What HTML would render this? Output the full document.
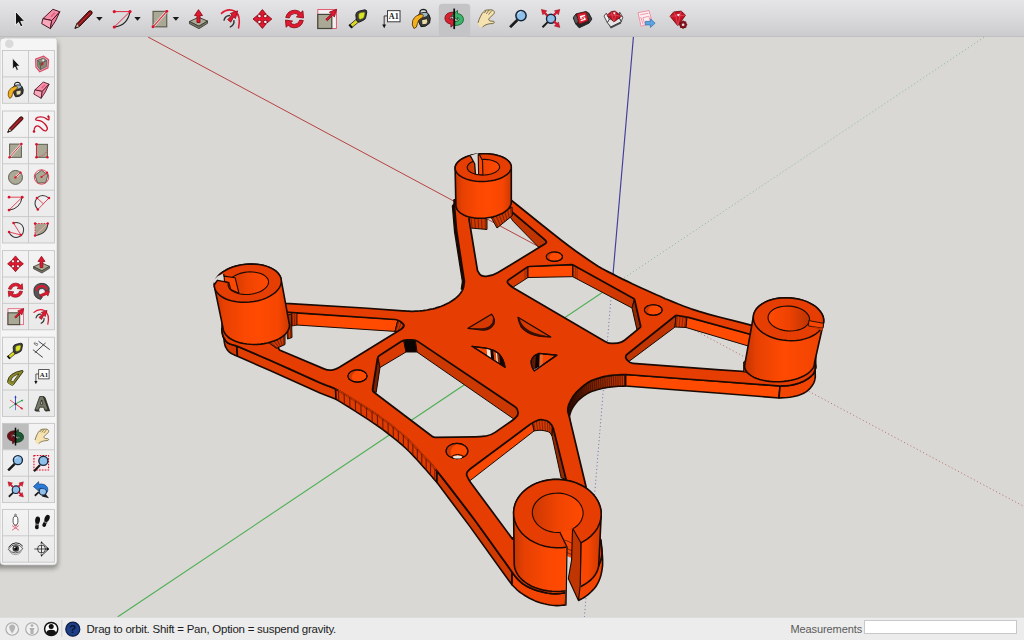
<!DOCTYPE html>
<html lang="en"><head><meta charset="utf-8"><title>SketchUp</title>
<style>
html,body{margin:0;padding:0;}
body{width:1024px;height:640px;overflow:hidden;position:relative;background:#d9d8d4;font-family:"Liberation Sans",sans-serif;}
#tb{position:absolute;left:0;top:0;width:1024px;height:36px;background:linear-gradient(#e5e4e6,#dcdbdd 40%,#d0cfd2 85%,#cbcacd);border-bottom:1px solid #bfbec1;box-sizing:content-box;}
svg{position:absolute;left:0;top:0;}
.st{position:absolute;top:621.5px;font-size:11.5px;line-height:15px;color:#1c1c1c;white-space:nowrap;letter-spacing:-0.245px;}
#hint{left:86.5px;}
#meas{left:790.5px;color:#5a5a5a;font-size:11px;letter-spacing:-0.1px;}
#mbox{position:absolute;left:864.3px;top:619.5px;width:153px;height:14.7px;background:#fff;border:1px solid #c8c8c8;box-sizing:border-box;}
</style></head><body>
<svg id="vp" width="1024" height="640" viewBox="0 0 1024 640">
<line x1="148" y1="37" x2="612.0" y2="286.0" stroke="#b43a3a" stroke-width="0.95"/>
<line x1="612.0" y1="286.0" x2="1024" y2="506.5" stroke="#a84a4a" stroke-width="1" stroke-dasharray="1.1 2.5" opacity="0.7"/>
<line x1="612.0" y1="286.0" x2="117.5" y2="617" stroke="#4fae55" stroke-width="1.1"/>
<line x1="612.0" y1="286.0" x2="984.5" y2="37" stroke="#5aa868" stroke-width="1" stroke-dasharray="1.1 2.5" opacity="0.6"/>
<line x1="612.0" y1="286.0" x2="633.4" y2="37" stroke="#403e9a" stroke-width="1.15"/>
<line x1="612.0" y1="286.0" x2="584.4" y2="617" stroke="#4a4aa8" stroke-width="1" stroke-dasharray="1.1 2.5" opacity="0.7"/>
<defs>
<linearGradient id="gcyl" x1="0" x2="1" y1="0" y2="0"><stop offset="0" stop-color="#c43602"/><stop offset="0.12" stop-color="#e64002"/><stop offset="0.4" stop-color="#fb4802"/><stop offset="0.6" stop-color="#ff4a02"/><stop offset="0.85" stop-color="#f64602"/><stop offset="1" stop-color="#cc3802"/></linearGradient>
<linearGradient id="gcylR" x1="0" x2="1" y1="0" y2="0"><stop offset="0" stop-color="#c03402"/><stop offset="0.15" stop-color="#e64002"/><stop offset="0.5" stop-color="#ff4a02"/><stop offset="1" stop-color="#ee4302"/></linearGradient>
<linearGradient id="ginL" x1="0" x2="1" y1="0" y2="0"><stop offset="0" stop-color="#cc3802"/><stop offset="0.5" stop-color="#f04402"/><stop offset="1" stop-color="#ff4a02"/></linearGradient>
<linearGradient id="ginR" x1="0" x2="1" y1="0" y2="0"><stop offset="0" stop-color="#ff4a02"/><stop offset="0.5" stop-color="#ee4202"/><stop offset="1" stop-color="#bc3402"/></linearGradient>
<linearGradient id="gwallUR" x1="0" x2="1" y1="0" y2="0"><stop offset="0" stop-color="#e23d02"/><stop offset="1" stop-color="#c83602"/></linearGradient>
<linearGradient id="gfil" x1="0" x2="1" y1="0" y2="0"><stop offset="0" stop-color="#180502"/><stop offset="0.3" stop-color="#6a1c02"/><stop offset="0.7" stop-color="#a42e02"/><stop offset="1" stop-color="#cc3802"/></linearGradient>
</defs>
<polygon points="221.9,329.0 222.0,329.7 222.1,330.7 222.2,331.8 222.3,333.0 222.5,334.0 222.7,334.8 222.8,335.5 223.0,336.2 223.3,337.0 223.8,337.8 224.4,338.8 225.1,339.9 225.9,341.0 226.8,342.1 228.0,343.0 229.6,343.8 231.6,344.5 233.6,345.1 235.4,345.6 236.7,346.0 237.5,356.2 236.4,355.8 234.9,355.2 233.2,354.4 231.4,353.5 230.0,352.6 228.8,351.6 227.8,350.4 226.9,349.2 226.1,347.8 225.4,346.5 224.9,345.0 224.5,343.2 224.2,341.5 224.1,340.0 223.9,339.0" fill="#d03a02" stroke="#1a0a04" stroke-width="1.6" stroke-linejoin="round" />
<polygon points="236.7,346.0 270.0,360.3 320.0,382.7 335.6,389.0 336.0,399.2 320.0,393.0 270.0,370.6 237.5,356.2" fill="#e03e02" stroke="#1a0a04" stroke-width="1.6" stroke-linejoin="round" />
<polygon points="335.6,389.0 338.8,390.9 343.3,393.5 348.5,396.6 353.9,399.9 359.0,403.0 363.7,406.0 368.4,409.0 373.1,412.0 377.8,415.2 382.5,418.6 387.3,422.2 392.2,426.0 397.0,429.8 401.7,433.7 406.0,437.5 409.9,441.2 413.6,445.0 417.0,448.7 420.3,452.3 423.4,455.8 426.6,459.3 429.8,462.8 432.7,466.2 435.2,469.0 437.0,471.0 437.0,482.5 435.2,480.4 432.7,477.6 429.8,474.2 426.6,470.5 423.4,467.0 420.3,463.5 417.0,459.8 413.6,456.1 409.9,452.3 406.0,448.5 401.7,444.7 397.0,440.7 392.2,436.8 387.3,433.0 382.5,429.4 377.8,426.0 373.1,422.8 368.4,419.7 363.7,416.6 359.0,413.6 354.0,410.4 348.7,407.0 343.5,403.9 339.1,401.1 336.0,399.2" fill="#e03c02" stroke="#1a0a04" stroke-width="1.6" stroke-linejoin="round" />
<polygon points="437.0,471.0 474.7,520.0 510.6,570.0 512.0,572.3 512.0,584.8 501.2,570.0 470.0,526.6 437.0,482.5" fill="#d03a02" stroke="#1a0a04" stroke-width="1.6" stroke-linejoin="round" />
<polygon points="512.0,572.3 513.2,573.8 515.0,576.0 517.0,578.4 519.0,580.5 520.9,582.2 522.8,583.7 524.8,585.1 527.0,586.4 529.5,587.6 532.2,588.8 535.1,589.9 538.0,590.8 541.0,591.6 544.2,592.4 547.3,593.0 550.0,593.4 552.3,593.7 554.2,593.8 556.1,593.8 558.0,593.7 560.2,593.5 562.5,593.2 564.6,592.8 566.0,592.6 565.5,605.0 564.2,605.1 562.2,605.3 560.1,605.5 558.0,605.6 556.1,605.6 554.3,605.5 552.3,605.3 550.0,605.0 547.3,604.5 544.2,603.8 541.0,603.0 538.0,602.0 535.1,600.9 532.2,599.5 529.5,598.2 527.0,596.8 524.8,595.5 522.8,594.2 520.9,592.9 519.0,591.5 517.0,589.8 515.0,587.8 513.2,586.0 512.0,584.8" fill="#f24402" stroke="#1a0a04" stroke-width="1.6" stroke-linejoin="round" />
<line x1="236.7" y1="346.0" x2="237.5" y2="356.2" stroke="#1a0a04" stroke-width="0.8" />
<line x1="512.0" y1="572.3" x2="512.0" y2="584.8" stroke="#1a0a04" stroke-width="0.8" />
<polygon points="578.0,585.0 579.1,584.5 580.7,583.8 582.4,582.9 584.0,582.0 585.4,581.1 586.7,580.1 588.0,579.0 589.4,577.8 590.8,576.5 592.3,575.1 593.7,573.6 595.0,572.0 596.1,570.4 597.1,568.7 597.9,567.0 598.8,565.3 599.5,563.5 600.2,561.7 600.8,559.8 601.3,558.0 601.6,556.4 601.9,554.8 602.0,553.1 601.9,551.0 601.6,548.0 601.0,544.4 600.4,541.1 600.0,538.8 601.0,540.0 601.3,543.6 601.8,548.8 602.3,554.4 602.6,559.0 602.6,562.4 602.6,565.1 602.3,567.6 602.0,570.0 601.5,572.5 601.0,574.9 600.3,577.2 599.5,579.4 598.7,581.5 597.7,583.4 596.7,585.2 595.5,587.0 594.1,588.7 592.5,590.4 590.9,592.0 589.4,593.4 588.0,594.6 586.7,595.7 585.3,596.6 584.0,597.5 582.5,598.4 580.9,599.3 579.4,600.0 578.4,600.5" fill="#f24402" stroke="#1a0a04" stroke-width="1.6" stroke-linejoin="round" />
<polygon points="569.0,415.6 568.7,414.8 568.4,413.6 568.0,412.3 567.8,411.0 567.8,409.7 567.9,408.3 568.2,406.9 568.5,405.5 569.0,404.1 569.6,402.8 570.3,401.4 571.0,400.0 571.8,398.6 572.6,397.2 573.5,395.8 574.5,394.5 575.5,393.3 576.5,392.2 577.6,391.1 578.8,390.0 580.1,388.8 581.5,387.5 583.0,386.2 584.5,385.0 586.0,383.9 587.6,382.8 589.3,381.7 591.0,380.8 592.9,380.0 594.9,379.3 597.0,378.6 599.0,378.0 601.0,377.4 602.9,376.9 604.9,376.4 607.0,376.0 609.2,375.7 611.4,375.4 613.7,375.2 616.0,375.0 618.6,374.8 621.4,374.7 623.9,374.6 625.6,374.5 625.6,386.0 623.9,386.1 621.4,386.2 618.6,386.3 616.0,386.5 613.7,386.7 611.4,386.9 609.2,387.2 607.0,387.5 604.9,387.9 602.9,388.3 601.0,388.7 599.0,389.2 597.0,389.7 594.9,390.4 592.9,391.0 591.0,391.7 589.3,392.5 587.8,393.3 586.4,394.1 585.0,395.0 583.7,395.9 582.4,396.8 581.2,397.8 580.0,398.8 578.9,399.8 577.9,400.8 576.9,401.9 576.0,403.0 575.1,404.2 574.1,405.5 573.3,406.8 572.5,408.0 571.9,409.1 571.4,410.2 570.9,411.4 570.5,412.5 570.1,413.7 569.8,414.9 569.5,416.2 569.4,417.5 569.4,418.8 569.4,420.1 569.6,421.5 569.8,423.0 570.2,424.8 570.8,426.8 571.3,428.7 571.7,430.0" fill="url(#gfil)" stroke="#1a0a04" stroke-width="1.6" stroke-linejoin="round" />
<line x1="567.8" y1="409.9" x2="569.4" y2="419.1" stroke="#3a0e02" stroke-width="0.9" opacity="0.7"/>
<line x1="568.0" y1="407.7" x2="569.5" y2="416.9" stroke="#3a0e02" stroke-width="0.9" opacity="0.7"/>
<line x1="568.5" y1="405.5" x2="569.8" y2="414.8" stroke="#3a0e02" stroke-width="0.9" opacity="0.7"/>
<line x1="569.3" y1="403.5" x2="570.4" y2="412.7" stroke="#3a0e02" stroke-width="0.9" opacity="0.7"/>
<line x1="570.2" y1="401.5" x2="571.2" y2="410.7" stroke="#3a0e02" stroke-width="0.9" opacity="0.7"/>
<line x1="571.3" y1="399.5" x2="572.1" y2="408.8" stroke="#3a0e02" stroke-width="0.9" opacity="0.7"/>
<line x1="572.4" y1="397.6" x2="573.2" y2="406.9" stroke="#3a0e02" stroke-width="0.9" opacity="0.7"/>
<line x1="573.6" y1="395.8" x2="574.4" y2="405.1" stroke="#3a0e02" stroke-width="0.9" opacity="0.7"/>
<line x1="574.9" y1="394.0" x2="575.7" y2="403.4" stroke="#3a0e02" stroke-width="0.9" opacity="0.7"/>
<line x1="576.4" y1="392.4" x2="577.0" y2="401.8" stroke="#3a0e02" stroke-width="0.9" opacity="0.7"/>
<line x1="577.9" y1="390.8" x2="578.5" y2="400.2" stroke="#3a0e02" stroke-width="0.9" opacity="0.7"/>
<line x1="579.5" y1="389.3" x2="580.0" y2="398.7" stroke="#3a0e02" stroke-width="0.9" opacity="0.7"/>
<line x1="581.2" y1="387.8" x2="581.7" y2="397.4" stroke="#3a0e02" stroke-width="0.9" opacity="0.7"/>
<line x1="582.8" y1="386.3" x2="583.4" y2="396.1" stroke="#3a0e02" stroke-width="0.9" opacity="0.7"/>
<line x1="584.6" y1="385.0" x2="585.2" y2="394.9" stroke="#3a0e02" stroke-width="0.9" opacity="0.7"/>
<line x1="586.3" y1="383.6" x2="587.0" y2="393.7" stroke="#3a0e02" stroke-width="0.9" opacity="0.7"/>
<line x1="588.2" y1="382.4" x2="588.9" y2="392.7" stroke="#3a0e02" stroke-width="0.9" opacity="0.7"/>
<line x1="590.1" y1="381.3" x2="590.8" y2="391.8" stroke="#3a0e02" stroke-width="0.9" opacity="0.7"/>
<line x1="592.1" y1="380.3" x2="592.8" y2="391.0" stroke="#3a0e02" stroke-width="0.9" opacity="0.7"/>
<line x1="594.1" y1="379.5" x2="594.9" y2="390.3" stroke="#3a0e02" stroke-width="0.9" opacity="0.7"/>
<line x1="596.2" y1="378.8" x2="596.9" y2="389.8" stroke="#3a0e02" stroke-width="0.9" opacity="0.7"/>
<line x1="598.3" y1="378.2" x2="599.0" y2="389.2" stroke="#3a0e02" stroke-width="0.9" opacity="0.7"/>
<line x1="600.5" y1="377.6" x2="601.1" y2="388.7" stroke="#3a0e02" stroke-width="0.9" opacity="0.7"/>
<line x1="602.6" y1="377.0" x2="603.2" y2="388.2" stroke="#3a0e02" stroke-width="0.9" opacity="0.7"/>
<line x1="604.7" y1="376.5" x2="605.3" y2="387.8" stroke="#3a0e02" stroke-width="0.9" opacity="0.7"/>
<line x1="606.9" y1="376.0" x2="607.4" y2="387.4" stroke="#3a0e02" stroke-width="0.9" opacity="0.7"/>
<line x1="609.1" y1="375.7" x2="609.5" y2="387.1" stroke="#3a0e02" stroke-width="0.9" opacity="0.7"/>
<line x1="611.3" y1="375.4" x2="611.7" y2="386.9" stroke="#3a0e02" stroke-width="0.9" opacity="0.7"/>
<line x1="613.5" y1="375.2" x2="613.8" y2="386.7" stroke="#3a0e02" stroke-width="0.9" opacity="0.7"/>
<line x1="615.7" y1="375.0" x2="616.0" y2="386.5" stroke="#3a0e02" stroke-width="0.9" opacity="0.7"/>
<line x1="617.9" y1="374.9" x2="618.1" y2="386.4" stroke="#3a0e02" stroke-width="0.9" opacity="0.7"/>
<line x1="620.1" y1="374.8" x2="620.2" y2="386.2" stroke="#3a0e02" stroke-width="0.9" opacity="0.7"/>
<line x1="622.3" y1="374.6" x2="622.4" y2="386.1" stroke="#3a0e02" stroke-width="0.9" opacity="0.7"/>
<line x1="624.5" y1="374.5" x2="624.5" y2="386.0" stroke="#3a0e02" stroke-width="0.9" opacity="0.7"/>
<polygon points="625.6,374.5 720.0,381.5 780.0,386.0 779.0,398.0 720.0,393.3 625.6,386.0" fill="#ff4a02" stroke="#1a0a04" stroke-width="1.6" stroke-linejoin="round" />
<polygon points="780.0,386.0 781.8,385.9 784.4,385.8 787.3,385.6 790.0,385.3 792.4,384.9 794.8,384.4 797.2,383.7 799.4,383.0 801.6,382.1 803.7,381.2 805.7,380.1 807.5,379.0 809.2,377.8 810.8,376.5 812.2,375.1 813.4,373.8 814.3,372.3 814.8,370.9 815.2,369.4 815.5,368.0 815.5,366.6 815.4,365.1 815.2,363.9 815.0,363.0 815.3,377.0 815.1,378.0 814.9,379.4 814.5,381.0 814.0,382.5 813.3,383.9 812.3,385.4 811.3,386.7 810.3,388.0 809.3,389.1 808.3,390.0 807.3,390.9 806.0,391.8 804.6,392.7 803.0,393.5 801.3,394.3 799.4,395.0 797.3,395.7 795.0,396.2 792.5,396.8 790.0,397.2 787.1,397.5 783.9,397.7 781.0,397.9 779.0,398.0" fill="#f24402" stroke="#1a0a04" stroke-width="1.6" stroke-linejoin="round" />
<line x1="625.6" y1="374.5" x2="625.6" y2="386.0" stroke="#1a0a04" stroke-width="0.8" />
<line x1="780.0" y1="386.0" x2="779.0" y2="398.0" stroke="#1a0a04" stroke-width="0.8" />
<polygon points="454.0,204.0 456.5,230.0 464.4,281.5 462.8,289.4 461.3,289.0 462.4,281.5 454.6,232.0 452.4,206.0" fill="#1a0602" stroke="#1a0a04" stroke-width="1.3" stroke-linejoin="round" />
<polygon points="512.0,212.0 546.3,241.5 546.0,244.0 538.4,247.0 513.4,221.5 508.0,214.0" fill="#c03402" stroke="#1a0a04" stroke-width="1" stroke-linejoin="round" />
<polygon points="504.0,281.4 528.0,266.5 528.0,277.5 513.3,287.0" fill="#d83a02" stroke="#1a0a04" stroke-width="1" stroke-linejoin="round" />
<polygon points="528.0,266.5 572.7,264.7 572.7,276.7 528.0,277.5" fill="#ff4a02" stroke="#1a0a04" stroke-width="1" stroke-linejoin="round" />
<polygon points="572.7,264.7 634.5,299.0 632.0,308.0 572.7,276.7" fill="url(#gwallUR)" stroke="#1a0a04" stroke-width="1" stroke-linejoin="round" />
<polygon points="634.5,299.0 640.8,327.0 637.0,330.0 632.0,308.0" fill="#982a02" stroke="#1a0a04" stroke-width="1" stroke-linejoin="round" />
<line x1="573.6" y1="265.2" x2="573.6" y2="277.2" stroke="#1a0a04" stroke-width="0.7" opacity="0.5"/>
<line x1="575.3" y1="266.1" x2="575.3" y2="278.1" stroke="#1a0a04" stroke-width="0.7" opacity="0.5"/>
<line x1="577.1" y1="267.0" x2="577.1" y2="279.0" stroke="#1a0a04" stroke-width="0.7" opacity="0.5"/>
<line x1="525.0" y1="268.4" x2="525.0" y2="279.4" stroke="#1a0a04" stroke-width="0.7" opacity="0.5"/>
<line x1="527.0" y1="267.1" x2="527.0" y2="278.1" stroke="#1a0a04" stroke-width="0.7" opacity="0.5"/>
<polygon points="623.0,356.0 676.0,315.3 675.0,327.0 629.0,361.4" fill="#c03402" stroke="#1a0a04" stroke-width="1" stroke-linejoin="round" />
<polygon points="676.0,315.3 687.0,317.0 686.0,327.5 675.0,327.0" fill="#d83a02" stroke="#1a0a04" stroke-width="1" stroke-linejoin="round" />
<line x1="677.4" y1="315.5" x2="676.4" y2="327.1" stroke="#1a0a04" stroke-width="0.7" opacity="0.6"/>
<line x1="680.1" y1="315.9" x2="679.1" y2="327.2" stroke="#1a0a04" stroke-width="0.7" opacity="0.6"/>
<line x1="682.9" y1="316.4" x2="681.9" y2="327.3" stroke="#1a0a04" stroke-width="0.7" opacity="0.6"/>
<line x1="685.6" y1="316.8" x2="684.6" y2="327.4" stroke="#1a0a04" stroke-width="0.7" opacity="0.6"/>
<polygon points="687.0,317.0 760.0,337.0 760.0,349.5 686.0,327.5" fill="#ff4a02" stroke="#1a0a04" stroke-width="1" stroke-linejoin="round" />
<polygon points="285.0,312.0 292.6,312.6 398.0,319.7 395.0,331.4 296.5,325.0 288.0,324.5" fill="#ff4a02" stroke="#1a0a04" stroke-width="1" stroke-linejoin="round" />
<polygon points="398.0,319.7 404.4,325.0 402.8,328.3 400.0,334.0 395.0,331.4" fill="#d83a02" stroke="#1a0a04" stroke-width="1" stroke-linejoin="round" />
<line x1="399.1" y1="320.6" x2="395.8" y2="331.8" stroke="#1a0a04" stroke-width="0.7" opacity="0.6"/>
<line x1="401.2" y1="322.3" x2="397.5" y2="332.7" stroke="#1a0a04" stroke-width="0.7" opacity="0.6"/>
<line x1="403.3" y1="324.1" x2="399.2" y2="333.6" stroke="#1a0a04" stroke-width="0.7" opacity="0.6"/>
<polygon points="377.8,356.5 372.3,391.0 376.2,392.5 380.0,367.5" fill="#7a2002" stroke="#1a0a04" stroke-width="1" stroke-linejoin="round" />
<polygon points="377.8,356.5 403.6,340.0 406.0,352.0 380.0,367.5" fill="#d83a02" stroke="#1a0a04" stroke-width="1" stroke-linejoin="round" />
<polygon points="403.6,339.0 415.3,339.0 417.0,352.0 406.0,352.0" fill="#0a0402" stroke="#1a0a04" stroke-width="1" stroke-linejoin="round" />
<polygon points="415.3,339.7 517.0,408.0 519.5,415.0 513.8,419.0 417.0,352.0" fill="#cc3802" stroke="#1a0a04" stroke-width="1" stroke-linejoin="round" />
<polygon points="532.3,422.7 533.6,422.0 535.4,421.0 537.4,420.1 539.4,419.5 541.3,419.3 543.3,419.4 545.2,419.7 547.0,420.3 548.7,421.5 550.3,423.1 551.7,424.7 552.7,425.8 552.0,436.0 551.5,435.2 550.9,434.1 550.0,432.9 548.8,432.0 547.1,431.4 545.1,430.9 543.0,430.5 541.0,430.3 539.0,430.3 537.0,430.5 535.2,430.8 534.0,431.0" fill="#d83a02" stroke="#1a0a04" stroke-width="1" stroke-linejoin="round" />
<line x1="533.6" y1="422.0" x2="535.3" y2="430.8" stroke="#1a0a04" stroke-width="0.7" opacity="0.6"/>
<line x1="536.2" y1="420.7" x2="537.8" y2="430.5" stroke="#1a0a04" stroke-width="0.7" opacity="0.6"/>
<line x1="539.0" y1="419.6" x2="540.3" y2="430.3" stroke="#1a0a04" stroke-width="0.7" opacity="0.6"/>
<line x1="541.9" y1="419.3" x2="542.8" y2="430.5" stroke="#1a0a04" stroke-width="0.7" opacity="0.6"/>
<line x1="544.8" y1="419.6" x2="545.3" y2="430.9" stroke="#1a0a04" stroke-width="0.7" opacity="0.6"/>
<line x1="547.5" y1="420.6" x2="547.7" y2="431.6" stroke="#1a0a04" stroke-width="0.7" opacity="0.6"/>
<line x1="549.7" y1="422.5" x2="549.9" y2="432.9" stroke="#1a0a04" stroke-width="0.7" opacity="0.6"/>
<line x1="551.7" y1="424.7" x2="551.3" y2="434.9" stroke="#1a0a04" stroke-width="0.7" opacity="0.6"/>
<polygon points="532.3,422.7 468.8,470.0 465.0,474.0 469.5,481.0 534.0,431.0" fill="#f84702" stroke="#1a0a04" stroke-width="1" stroke-linejoin="round" />
<polygon points="552.7,425.8 566.0,479.0 561.2,478.0 552.0,436.0" fill="#982a02" stroke="#1a0a04" stroke-width="1" stroke-linejoin="round" />
<path d="M454.0 200.0 L456.5 230.0 L464.4 281.5 L464.3 282.2 L464.2 283.3 L464.0 284.4 L463.8 285.5 L463.6 286.5 L463.5 287.4 L463.2 288.3 L462.8 289.4 L462.2 290.6 L461.4 291.9 L460.5 293.3 L459.5 294.5 L458.5 295.6 L457.4 296.7 L456.3 297.7 L455.0 298.8 L453.6 299.8 L452.1 300.8 L450.6 301.8 L449.0 302.7 L447.4 303.5 L445.8 304.3 L444.2 305.1 L442.5 305.8 L440.7 306.5 L438.8 307.1 L436.9 307.7 L435.0 308.3 L433.0 308.8 L431.0 309.2 L429.0 309.6 L427.0 310.0 L425.0 310.3 L423.0 310.6 L421.0 310.8 L419.0 311.0 L417.1 311.1 L415.2 311.2 L413.2 311.3 L411.2 311.3 L409.0 311.2 L406.5 311.1 L404.3 310.9 L402.8 310.8 L363.8 308.0 L285.6 303.3 L270.0 302.0 L222.5 322.0 L222.4 323.0 L222.2 324.4 L222.1 326.0 L222.0 327.6 L221.9 329.0 L221.9 330.1 L222.0 331.2 L222.2 332.2 L222.3 333.1 L222.5 334.0 L222.7 334.8 L222.8 335.5 L223.0 336.2 L223.3 337.0 L223.8 337.8 L224.4 338.8 L225.1 339.9 L225.9 341.0 L226.8 342.1 L228.0 343.0 L229.6 343.8 L231.6 344.5 L233.6 345.1 L235.4 345.6 L236.7 346.0 L241.0 347.8 L246.8 350.3 L253.9 353.3 L261.7 356.7 L270.0 360.3 L279.5 364.5 L290.4 369.4 L301.7 374.5 L311.9 379.1 L320.0 382.7 L325.2 384.9 L328.3 386.0 L330.4 386.7 L332.5 387.5 L335.6 389.0 L339.8 391.3 L344.4 394.0 L349.3 396.9 L354.2 400.0 L359.0 403.0 L363.7 406.0 L368.4 409.0 L373.1 412.0 L377.8 415.2 L382.5 418.6 L387.3 422.2 L392.2 426.0 L397.0 429.8 L401.7 433.7 L406.0 437.5 L409.9 441.2 L413.6 445.0 L417.0 448.7 L420.3 452.3 L423.4 455.8 L426.0 458.5 L428.0 460.5 L430.0 462.6 L432.8 465.8 L437.0 471.0 L443.0 478.6 L450.4 488.1 L458.6 498.7 L466.9 509.6 L474.7 520.0 L482.5 530.7 L490.8 542.2 L498.8 553.4 L505.7 563.0 L510.6 570.0 L513.1 573.5 L513.7 574.5 L513.2 573.8 L512.4 572.8 L512.0 572.3 L513.2 573.8 L515.0 576.0 L517.0 578.4 L519.0 580.5 L520.9 582.2 L522.8 583.7 L524.8 585.1 L527.0 586.4 L529.5 587.6 L532.2 588.8 L535.1 589.9 L538.0 590.8 L541.0 591.6 L544.2 592.4 L547.3 593.0 L550.0 593.4 L552.3 593.7 L554.2 593.8 L556.1 593.8 L558.0 593.7 L560.2 593.5 L562.5 593.2 L564.6 592.8 L566.0 592.6 L566.0 560.0 L578.0 560.0 L578.0 585.0 L579.1 584.5 L580.7 583.8 L582.4 582.9 L584.0 582.0 L585.4 581.1 L586.7 580.1 L588.0 579.0 L589.4 577.8 L590.8 576.5 L592.3 575.1 L593.7 573.6 L595.0 572.0 L596.1 570.4 L597.1 568.7 L597.9 567.0 L598.8 565.3 L599.5 563.5 L600.2 561.7 L600.8 559.8 L601.3 558.0 L601.6 556.4 L601.9 554.8 L602.0 553.1 L601.9 551.0 L601.6 548.0 L601.0 544.4 L600.4 541.1 L600.0 538.8 L586.2 487.5 L569.0 415.6 L568.7 414.8 L568.4 413.6 L568.0 412.3 L567.8 411.0 L567.8 409.7 L567.9 408.3 L568.2 406.9 L568.5 405.5 L569.0 404.1 L569.6 402.8 L570.3 401.4 L571.0 400.0 L571.8 398.6 L572.6 397.2 L573.5 395.8 L574.5 394.5 L575.5 393.3 L576.5 392.2 L577.6 391.1 L578.8 390.0 L580.1 388.8 L581.5 387.5 L583.0 386.2 L584.5 385.0 L586.0 383.9 L587.6 382.8 L589.3 381.7 L591.0 380.8 L592.9 380.0 L594.9 379.3 L597.0 378.6 L599.0 378.0 L601.0 377.4 L602.9 376.9 L604.9 376.4 L607.0 376.0 L609.2 375.7 L611.4 375.4 L613.7 375.2 L616.0 375.0 L618.6 374.8 L621.4 374.7 L623.9 374.6 L625.6 374.5 L720.0 381.5 L780.0 386.0 L781.8 385.9 L784.4 385.8 L787.3 385.6 L790.0 385.3 L792.4 384.9 L794.8 384.4 L797.2 383.7 L799.4 383.0 L801.6 382.1 L803.7 381.2 L805.7 380.1 L807.5 379.0 L809.2 377.8 L810.8 376.5 L812.2 375.1 L813.4 373.8 L814.3 372.3 L814.8 370.9 L815.2 369.4 L815.5 368.0 L815.5 366.6 L815.4 365.1 L815.2 363.9 L815.0 363.0 L812.0 340.0 L751.7 325.3 L744.2 323.4 L733.4 320.6 L721.0 317.5 L709.0 314.3 L699.0 311.4 L691.0 308.8 L683.9 306.2 L677.7 303.8 L672.4 301.6 L668.0 299.8 L665.2 298.7 L663.9 298.1 L663.2 297.8 L662.2 297.3 L660.0 296.2 L656.4 294.7 L651.9 292.7 L647.0 290.5 L641.9 288.2 L637.0 286.0 L632.2 283.8 L627.4 281.4 L622.5 279.1 L617.8 276.7 L613.3 274.4 L609.3 272.4 L605.8 270.6 L602.3 268.7 L598.4 266.4 L593.8 263.4 L588.3 259.8 L582.5 255.8 L576.0 251.2 L568.9 246.0 L561.0 240.0 L551.2 232.3 L539.6 223.0 L527.8 213.5 L517.5 205.2 L510.3 199.4 L483.0 190.0 Z M469.0 219.0 L477.5 270.6 L479.4 273.8 Q481.0 276.5 486.2 276.3 L487.3 276.2 Q492.5 276.0 498.0 272.6 L544.8 244.0 Q546.5 243.0 546.4 242.1 L546.4 241.9 Q546.3 241.0 544.8 239.7 L512.0 212.0 L500.0 205.0 L480.0 210.0 Z M508.3 283.6 Q506.2 281.4 508.7 279.7 L527.2 267.1 Q528.0 266.5 529.0 266.5 L571.7 264.7 Q572.7 264.7 573.6 265.2 L633.6 298.5 Q634.5 299.0 634.7 300.0 L640.6 326.0 Q640.8 327.0 640.0 327.6 L624.6 340.3 Q621.5 342.8 617.5 343.1 L613.0 343.4 Q609.0 343.7 605.5 341.7 L513.6 288.0 Q511.0 286.5 509.0 284.3 Z M626.6 359.3 Q624.5 356.5 627.2 354.3 L674.8 316.2 Q676.0 315.3 677.5 315.5 L685.5 316.8 Q687.0 317.0 688.4 317.4 L760.0 337.0 L760.0 372.5 L720.0 369.8 L633.0 363.3 Q629.5 363.0 627.4 360.2 Z M279.4 350.0 L270.0 330.0 L285.0 312.0 L292.6 312.6 L395.0 319.5 Q398.0 319.7 400.4 321.5 L402.2 323.0 Q404.6 324.8 403.8 326.4 L403.6 326.7 Q402.8 328.3 401.1 329.3 L339.0 367.6 Q335.6 369.7 332.1 370.1 L331.3 370.1 Q327.8 370.5 324.1 368.9 Z M377.5 358.5 Q377.8 356.5 379.5 355.4 L401.1 341.6 Q403.6 340.0 406.6 339.9 L412.3 339.8 Q415.3 339.7 417.8 341.4 L515.3 406.9 Q517.0 408.0 517.4 409.9 L517.9 411.9 Q518.6 415.0 516.1 417.2 L515.2 418.0 Q513.0 420.0 510.5 421.7 L495.1 432.4 Q491.0 435.3 486.1 436.0 L484.9 436.1 Q480.0 436.8 475.0 436.9 L435.6 437.4 Q433.6 437.4 432.0 436.2 L373.9 392.2 Q372.3 391.0 372.6 389.0 Z M529.9 424.5 Q532.3 422.7 535.0 421.5 L536.7 420.7 Q539.4 419.5 542.4 419.8 L544.0 420.0 Q547.0 420.3 549.2 422.4 L550.5 423.7 Q552.7 425.8 553.4 428.7 L566.0 479.0 L540.0 500.0 L512.5 539.0 L471.0 483.0 Q469.5 481.0 468.4 478.8 L467.3 476.7 Q466.0 474.0 467.2 472.2 L467.6 471.6 Q468.8 470.0 470.4 468.8 Z" fill="#e63d02" fill-rule="evenodd" stroke="#1a0a04" stroke-width="1.75" stroke-linejoin="round"/>
<polyline points="338.8,390.9 343.3,393.5 348.5,396.6 353.9,399.9 359.0,403.0 363.7,406.0 368.4,409.0 373.1,412.0 377.8,415.2 382.5,418.6 387.3,422.2 392.2,426.0 397.0,429.8 401.7,433.7 406.0,437.5 409.9,441.2 413.6,445.0 417.0,448.7 420.3,452.3 423.4,455.8 426.6,459.3 429.8,462.8 432.7,466.2 435.2,469.0" fill="none" stroke="#e63d02" stroke-width="1.9" stroke-linejoin="round" stroke-linecap="round" />
<polyline points="335.6,389.0 338.8,390.9 343.3,393.5 348.5,396.6 353.9,399.9 359.0,403.0 363.7,406.0 368.4,409.0 373.1,412.0 377.8,415.2 382.5,418.6 387.3,422.2 392.2,426.0 397.0,429.8 401.7,433.7 406.0,437.5 409.9,441.2 413.6,445.0 417.0,448.7 420.3,452.3 423.4,455.8 426.6,459.3 429.8,462.8 432.7,466.2 435.2,469.0 437.0,471.0" fill="none" stroke="#7a2002" stroke-width="0.7" stroke-linejoin="round" stroke-linecap="round" />
<line x1="338.4" y1="390.7" x2="338.8" y2="400.9" stroke="#5a1602" stroke-width="1.1" opacity="0.85"/>
<line x1="344.1" y1="394.0" x2="344.4" y2="404.4" stroke="#5a1602" stroke-width="1.1" opacity="0.85"/>
<line x1="349.7" y1="397.3" x2="350.0" y2="407.9" stroke="#5a1602" stroke-width="1.1" opacity="0.85"/>
<line x1="355.4" y1="400.7" x2="355.6" y2="411.4" stroke="#5a1602" stroke-width="1.1" opacity="0.85"/>
<line x1="360.9" y1="404.2" x2="361.1" y2="415.0" stroke="#5a1602" stroke-width="1.1" opacity="0.85"/>
<line x1="366.5" y1="407.7" x2="366.6" y2="418.5" stroke="#5a1602" stroke-width="1.1" opacity="0.85"/>
<line x1="372.0" y1="411.3" x2="372.2" y2="422.2" stroke="#5a1602" stroke-width="1.1" opacity="0.85"/>
<line x1="377.4" y1="415.0" x2="377.6" y2="425.9" stroke="#5a1602" stroke-width="1.1" opacity="0.85"/>
<line x1="382.8" y1="418.8" x2="382.9" y2="429.7" stroke="#5a1602" stroke-width="1.1" opacity="0.85"/>
<line x1="388.0" y1="422.7" x2="388.2" y2="433.7" stroke="#5a1602" stroke-width="1.1" opacity="0.85"/>
<line x1="393.2" y1="426.8" x2="393.4" y2="437.8" stroke="#5a1602" stroke-width="1.1" opacity="0.85"/>
<line x1="398.3" y1="430.9" x2="398.5" y2="442.0" stroke="#5a1602" stroke-width="1.1" opacity="0.85"/>
<line x1="403.3" y1="435.1" x2="403.5" y2="446.2" stroke="#5a1602" stroke-width="1.1" opacity="0.85"/>
<line x1="408.2" y1="439.6" x2="408.3" y2="450.7" stroke="#5a1602" stroke-width="1.1" opacity="0.85"/>
<line x1="412.8" y1="444.2" x2="412.9" y2="455.4" stroke="#5a1602" stroke-width="1.1" opacity="0.85"/>
<line x1="417.3" y1="449.0" x2="417.4" y2="460.3" stroke="#5a1602" stroke-width="1.1" opacity="0.85"/>
<line x1="421.7" y1="453.9" x2="421.8" y2="465.2" stroke="#5a1602" stroke-width="1.1" opacity="0.85"/>
<line x1="426.1" y1="458.7" x2="426.2" y2="470.1" stroke="#5a1602" stroke-width="1.1" opacity="0.85"/>
<line x1="430.5" y1="463.6" x2="430.5" y2="475.0" stroke="#5a1602" stroke-width="1.1" opacity="0.85"/>
<line x1="434.8" y1="468.5" x2="434.8" y2="480.0" stroke="#5a1602" stroke-width="1.1" opacity="0.85"/>
<ellipse cx="554.4" cy="256.7" rx="8.1" ry="4.7" fill="#ff4a02" stroke="#1a0a04" stroke-width="1.1"/>
<path d="M551.6 261.1 A8.1 4.7 0 0 1 555.2 252.0 A10.1 6.1 0 0 0 551.6 261.1 Z" fill="#cc3802" opacity="0.9"/>
<ellipse cx="554.4" cy="256.7" rx="8.1" ry="4.7" fill="none" stroke="#1a0a04" stroke-width="1.1"/>
<ellipse cx="653.3" cy="310.0" rx="8.9" ry="5.2" fill="#ff4a02" stroke="#1a0a04" stroke-width="1.1"/>
<path d="M650.2 314.8 A8.9 5.2 0 0 1 654.2 304.9 A11.1 6.8 0 0 0 650.2 314.8 Z" fill="#cc3802" opacity="0.9"/>
<ellipse cx="653.3" cy="310.0" rx="8.9" ry="5.2" fill="none" stroke="#1a0a04" stroke-width="1.1"/>
<ellipse cx="357.5" cy="376.0" rx="9.6" ry="6.1" fill="#ff4a02" stroke="#1a0a04" stroke-width="1.1"/>
<path d="M354.1 381.7 A9.6 6.1 0 0 1 358.5 370.0 A12.0 7.9 0 0 0 354.1 381.7 Z" fill="#cc3802" opacity="0.9"/>
<ellipse cx="357.5" cy="376.0" rx="9.6" ry="6.1" fill="none" stroke="#1a0a04" stroke-width="1.1"/>
<ellipse cx="457.0" cy="451.0" rx="10.9" ry="7.6" fill="#ff4a02" stroke="#1a0a04" stroke-width="1.1"/>
<path d="M453.2 458.1 A10.9 7.6 0 0 1 458.1 443.5 A13.6 9.9 0 0 0 453.2 458.1 Z" fill="#cc3802" opacity="0.9"/>
<ellipse cx="457.0" cy="451.0" rx="10.9" ry="7.6" fill="none" stroke="#1a0a04" stroke-width="1.1"/>
<ellipse cx="457.5" cy="457" rx="4.5" ry="1.6" fill="#e8e6e2"/>
<path d="M451.5 456.5 Q457.5 452.5 464 456.5" fill="none" stroke="#1a0a04" stroke-width="1"/>
<path d="M468 328.3 L491.5 314.2 Q495.5 319 494 323.6 Q490 330.5 483 330 Z" fill="#d63a02" stroke="#1a0a04" stroke-width="1.3" stroke-linejoin="round"/>
<path d="M468 328.3 L483 330 Q490 330.5 494 323.6 Q494.6 320 493.2 316.5 L492.4 322.6 Q489 328.4 482 328.3 Z" fill="#3a0e02"/>
<path d="M518 317.3 L550.8 337 L538.8 336.2 Q526 333.5 521 326.5 Q518.8 322 518 317.3 Z" fill="#d83a02" stroke="#1a0a04" stroke-width="1.3" stroke-linejoin="round"/>
<path d="M518 317.3 Q518.8 322 521 326.5 Q526 333.5 538.8 336.2 L550.8 337 L540 334.6 Q528 331.6 523 325.6 Q520.4 322 519.4 318.6 Z" fill="#3a0e02"/>
<clipPath id="cbl"><path d="M472 346.3 L486 348.2 Q493.5 349.6 498.5 353.5 Q503.6 358.4 505 367.3 Z"/></clipPath>
<path d="M472 346.3 L486 348.2 Q493.5 349.6 498.5 353.5 Q503.6 358.4 505 367.3 Z" fill="#fb4802" stroke="#1a0a04" stroke-width="1.3" stroke-linejoin="round"/>
<g clip-path="url(#cbl)">
<path d="M486.3 344 L490.0 344 L492.0 370 L488.3 370 Z" fill="#f2e6dc"/>
<path d="M490.0 344 L493.0 344 L495.0 370 L492.0 370 Z" fill="#120402"/>
<path d="M493.0 344 L495.2 344 L497.2 370 L495.0 370 Z" fill="#d84a1a"/>
<path d="M495.2 344 L496.6 344 L498.6 370 L497.2 370 Z" fill="#f2e6dc"/>
<path d="M496.6 344 L498.4 344 L500.4 370 L498.6 370 Z" fill="#8a2a08"/>
<path d="M498.4 344 L506.0 344 L508.0 370 L500.4 370 Z" fill="#120402"/>
</g>
<path d="M472 346.3 L486 348.2 Q493.5 349.6 498.5 353.5 Q503.6 358.4 505 367.3 Z" fill="none" stroke="#1a0a04" stroke-width="1.3" stroke-linejoin="round"/>
<clipPath id="cbr"><path d="M556.8 355.1 L538.8 353.5 Q532.4 355.6 531.2 361 Q531 366.6 534.4 370.8 Z"/></clipPath>
<path d="M556.8 355.1 L538.8 353.5 Q532.4 355.6 531.2 361 Q531 366.6 534.4 370.8 Z" fill="#fb4802" stroke="#1a0a04" stroke-width="1.3" stroke-linejoin="round"/>
<g clip-path="url(#cbr)">
<path d="M529.0 352 L535.5 352 L534.9 372 L528.4 372 Z" fill="#5a1a04"/>
<path d="M535.5 352 L539.9 352 L539.3 372 L534.9 372 Z" fill="#0e0302"/>
<path d="M539.9 352 L543.0 352 L542.4 372 L539.3 372 Z" fill="#e86a30"/>
<path d="M533.6 369.8 L539.8 366.4 L540 368.4 L535.4 371 Z" fill="#f4f0ec"/>
</g>
<path d="M556.8 355.1 L538.8 353.5 Q532.4 355.6 531.2 361 Q531 366.6 534.4 370.8 Z" fill="none" stroke="#1a0a04" stroke-width="1.3" stroke-linejoin="round"/>
<polygon points="469.0,216.0 487.0,219.0 487.0,229.5 470.5,228.0" fill="#d03a02" stroke="#1a0a04" stroke-width="1" stroke-linejoin="round" /><line x1="470.8" y1="216.3" x2="472.1" y2="228.1" stroke="#1a0a04" stroke-width="0.7" opacity="0.7"/>
<line x1="474.4" y1="216.9" x2="475.4" y2="228.4" stroke="#1a0a04" stroke-width="0.7" opacity="0.7"/>
<line x1="478.0" y1="217.5" x2="478.7" y2="228.7" stroke="#1a0a04" stroke-width="0.7" opacity="0.7"/>
<line x1="481.6" y1="218.1" x2="482.0" y2="229.0" stroke="#1a0a04" stroke-width="0.7" opacity="0.7"/>
<line x1="485.2" y1="218.7" x2="485.3" y2="229.3" stroke="#1a0a04" stroke-width="0.7" opacity="0.7"/>
<polygon points="491.5,218.0 512.0,207.0 512.5,215.5 497.0,228.0" fill="#d03a02" stroke="#1a0a04" stroke-width="1" stroke-linejoin="round" /><line x1="493.0" y1="217.2" x2="498.1" y2="227.1" stroke="#1a0a04" stroke-width="0.7" opacity="0.7"/>
<line x1="495.9" y1="215.6" x2="500.3" y2="225.3" stroke="#1a0a04" stroke-width="0.7" opacity="0.7"/>
<line x1="498.8" y1="214.1" x2="502.5" y2="223.5" stroke="#1a0a04" stroke-width="0.7" opacity="0.7"/>
<line x1="501.7" y1="212.5" x2="504.7" y2="221.8" stroke="#1a0a04" stroke-width="0.7" opacity="0.7"/>
<line x1="504.7" y1="210.9" x2="507.0" y2="220.0" stroke="#1a0a04" stroke-width="0.7" opacity="0.7"/>
<line x1="507.6" y1="209.4" x2="509.2" y2="218.2" stroke="#1a0a04" stroke-width="0.7" opacity="0.7"/>
<line x1="510.5" y1="207.8" x2="511.4" y2="216.4" stroke="#1a0a04" stroke-width="0.7" opacity="0.7"/>
<polygon points="455.1,168.3 455.9,205.8 456.2,207.3 456.7,208.8 457.6,210.2 458.7,211.5 460.2,212.8 461.9,213.9 463.8,215.0 465.9,215.9 468.2,216.7 470.7,217.3 473.4,217.8 476.1,218.1 479.0,218.3 481.8,218.3 484.7,218.2 487.6,217.8 490.5,217.4 493.3,216.8 495.9,216.0 498.4,215.1 500.8,214.1 503.0,213.0 505.0,211.7 506.7,210.4 508.2,209.0 509.4,207.5 510.3,206.0 510.9,204.5 511.3,203.0 511.3,201.4 511.3,166.9 511.1,165.4 510.6,164.0 509.8,162.6 508.7,161.3 507.3,160.0 505.7,158.8 503.8,157.8 501.7,156.8 499.4,155.9 496.9,155.2 494.3,154.6 491.5,154.2 488.7,153.9 485.8,153.7 482.8,153.7 479.9,153.9 477.0,154.2 474.2,154.6 471.4,155.2 468.8,155.9 466.4,156.8 464.1,157.8 462.1,158.8 460.3,160.0 458.7,161.3 457.4,162.6 456.4,164.0 455.6,165.4 455.2,166.9 455.1,168.3" fill="url(#gcyl)" stroke="#1a0a04" stroke-width="1.6" stroke-linejoin="round"/>
<polygon points="511.3,166.9 511.1,168.7 510.4,170.5 509.3,172.2 507.7,173.9 505.7,175.5 503.3,176.9 500.6,178.2 497.6,179.3 494.3,180.2 490.8,180.8 487.2,181.3 483.6,181.5 479.9,181.5 476.3,181.2 472.8,180.7 469.5,180.0 466.4,179.1 463.6,177.9 461.1,176.6 459.1,175.2 457.4,173.6 456.2,171.9 455.4,170.1 455.1,168.3 455.3,166.5 456.0,164.7 457.1,163.0 458.7,161.3 460.7,159.7 463.1,158.3 465.8,157.0 468.8,155.9 472.1,155.0 475.6,154.4 479.2,153.9 482.8,153.7 486.5,153.7 490.1,154.0 493.6,154.5 496.9,155.2 500.0,156.1 502.8,157.3 505.3,158.6 507.3,160.0 509.0,161.6 510.2,163.3 511.0,165.1 511.3,166.9" fill="#e63d02" stroke="#1a0a04" stroke-width="1.5"/><polygon points="499.6,166.8 499.5,167.8 499.1,168.8 498.4,169.8 497.5,170.7 496.4,171.6 495.0,172.4 493.4,173.1 491.7,173.7 489.8,174.2 487.8,174.6 485.7,174.9 483.6,175.0 481.5,175.0 479.4,174.8 477.4,174.6 475.5,174.2 473.7,173.6 472.1,173.0 470.7,172.3 469.5,171.5 468.5,170.6 467.8,169.6 467.4,168.6 467.2,167.6 467.3,166.6 467.7,165.6 468.4,164.6 469.3,163.7 470.4,162.8 471.8,162.0 473.4,161.3 475.1,160.7 477.0,160.2 479.0,159.8 481.1,159.5 483.2,159.4 485.3,159.4 487.4,159.6 489.4,159.8 491.3,160.2 493.1,160.8 494.7,161.4 496.1,162.1 497.3,162.9 498.3,163.8 499.0,164.8 499.4,165.8 499.6,166.8" fill="url(#ginL)" stroke="#1a0a04" stroke-width="1.1"/>
<polygon points="470.2,155.4 478.2,153.2 478.6,174.3 475.4,173.6 474.7,163.8" fill="#d9d8d4" stroke="none" stroke-width="0" stroke-linejoin="round" />
<polyline points="470.4,156.0 474.7,163.8 475.4,173.8" fill="none" stroke="#1a0a04" stroke-width="1.3" stroke-linejoin="round" stroke-linecap="round" />
<polygon points="478.2,154.6 479.8,155.2 482.5,160.6 482.9,175.0 478.6,174.5" fill="#fb4802" stroke="#1a0a04" stroke-width="1.1" stroke-linejoin="round" />
<polygon points="267.0,341.4 285.0,335.0 285.0,344.5 276.5,348.4" fill="#d03a02" stroke="#1a0a04" stroke-width="1" stroke-linejoin="round" /><line x1="268.8" y1="340.8" x2="277.3" y2="348.0" stroke="#1a0a04" stroke-width="0.7" opacity="0.7"/>
<line x1="272.4" y1="339.5" x2="279.0" y2="347.2" stroke="#1a0a04" stroke-width="0.7" opacity="0.7"/>
<line x1="276.0" y1="338.2" x2="280.7" y2="346.5" stroke="#1a0a04" stroke-width="0.7" opacity="0.7"/>
<line x1="279.6" y1="336.9" x2="282.4" y2="345.7" stroke="#1a0a04" stroke-width="0.7" opacity="0.7"/>
<line x1="283.2" y1="335.6" x2="284.1" y2="344.9" stroke="#1a0a04" stroke-width="0.7" opacity="0.7"/>
<polygon points="285.6,315.6 291.4,314.0 292.0,337.5 287.5,339.0" fill="#d03a02" stroke="#1a0a04" stroke-width="1" stroke-linejoin="round" /><line x1="287.0" y1="315.2" x2="288.6" y2="338.6" stroke="#1a0a04" stroke-width="0.7" opacity="0.7"/>
<line x1="289.9" y1="314.4" x2="290.9" y2="337.9" stroke="#1a0a04" stroke-width="0.7" opacity="0.7"/>
<polygon points="291.4,313.0 297.0,313.0 297.0,325.0 292.0,326.0" fill="#d83a02" stroke="#1a0a04" stroke-width="0.8" stroke-linejoin="round" />
<line x1="292.3" y1="313.0" x2="292.8" y2="325.8" stroke="#1a0a04" stroke-width="0.7" opacity="0.6"/>
<line x1="294.2" y1="313.0" x2="294.5" y2="325.5" stroke="#1a0a04" stroke-width="0.7" opacity="0.6"/>
<line x1="296.1" y1="313.0" x2="296.2" y2="325.2" stroke="#1a0a04" stroke-width="0.7" opacity="0.6"/>
<polygon points="214.3,286.1 223.1,328.3 223.4,330.2 224.1,332.0 225.1,333.7 226.4,335.4 228.1,337.0 230.0,338.5 232.3,339.8 234.8,341.0 237.6,342.0 240.5,342.9 243.7,343.5 246.9,344.0 250.3,344.3 253.8,344.5 257.2,344.4 260.7,344.1 264.1,343.6 267.4,343.0 270.6,342.1 273.7,341.1 276.5,340.0 279.2,338.6 281.6,337.2 283.7,335.6 285.5,334.0 287.0,332.2 288.1,330.4 288.9,328.6 289.4,326.7 289.5,324.9 281.3,280.3 280.9,278.3 280.2,276.4 279.1,274.6 277.7,272.8 276.0,271.2 273.9,269.7 271.6,268.4 269.0,267.2 266.1,266.2 263.1,265.3 259.9,264.7 256.6,264.3 253.1,264.1 249.7,264.1 246.1,264.3 242.7,264.7 239.2,265.3 235.9,266.1 232.7,267.1 229.6,268.3 226.8,269.6 224.2,271.1 221.8,272.7 219.7,274.4 218.0,276.3 216.5,278.2 215.5,280.1 214.7,282.1 214.3,284.1 214.3,286.1" fill="url(#gcyl)" stroke="#1a0a04" stroke-width="1.6" stroke-linejoin="round"/>
<polygon points="281.3,280.3 281.2,282.8 280.6,285.3 279.4,287.7 277.6,290.1 275.4,292.4 272.6,294.5 269.5,296.4 266.0,298.1 262.1,299.6 258.1,300.7 253.8,301.6 249.5,302.1 245.1,302.3 240.7,302.2 236.5,301.8 232.5,301.1 228.7,300.0 225.3,298.7 222.3,297.0 219.6,295.2 217.5,293.1 215.9,290.9 214.8,288.6 214.3,286.1 214.4,283.6 215.0,281.1 216.2,278.7 218.0,276.3 220.2,274.0 223.0,271.9 226.1,270.0 229.6,268.3 233.5,266.8 237.5,265.7 241.8,264.8 246.1,264.3 250.5,264.1 254.9,264.2 259.1,264.6 263.1,265.3 266.9,266.4 270.3,267.7 273.3,269.4 276.0,271.2 278.1,273.3 279.7,275.5 280.8,277.8 281.3,280.3" fill="#e63d02" stroke="#1a0a04" stroke-width="1.5"/><polygon points="268.5,281.4 268.5,282.9 268.1,284.4 267.4,285.8 266.3,287.2 264.9,288.6 263.3,289.8 261.4,291.0 259.3,292.0 256.9,292.8 254.5,293.5 251.9,294.0 249.3,294.4 246.6,294.5 244.0,294.4 241.5,294.2 239.0,293.7 236.8,293.1 234.7,292.3 232.9,291.4 231.3,290.3 230.0,289.1 229.0,287.8 228.4,286.4 228.1,285.0 228.1,283.5 228.5,282.0 229.2,280.6 230.3,279.2 231.7,277.8 233.3,276.6 235.2,275.4 237.3,274.4 239.7,273.6 242.1,272.9 244.7,272.4 247.3,272.0 250.0,271.9 252.6,272.0 255.1,272.2 257.6,272.7 259.8,273.3 261.9,274.1 263.7,275.0 265.3,276.1 266.6,277.3 267.6,278.6 268.2,280.0 268.5,281.4" fill="url(#ginL)" stroke="#1a0a04" stroke-width="1.1"/>
<polygon points="213.8,283.5 217.3,280.2 224.5,281.6 224.1,276.1 223.6,273.6 218.0,276.0 213.5,280.0" fill="#d9d8d4" stroke="none" stroke-width="0" stroke-linejoin="round" />
<polygon points="224.1,276.1 235.1,277.7 239.0,293.3 230.8,289.4 228.8,282.7 224.5,281.5" fill="#fb4802" stroke="#1a0a04" stroke-width="1.1" stroke-linejoin="round" />
<polyline points="217.4,280.4 224.3,281.6 228.8,282.7" fill="none" stroke="#1a0a04" stroke-width="1.2" stroke-linejoin="round" stroke-linecap="round" />
<polyline points="214.5,284.5 217.4,280.4" fill="none" stroke="#1a0a04" stroke-width="1.4" stroke-linejoin="round" stroke-linecap="round" />
<polyline points="223.7,274.4 224.1,276.1" fill="none" stroke="#1a0a04" stroke-width="1.4" stroke-linejoin="round" stroke-linecap="round" />
<polygon points="743.5,362.0 749.0,358.0 749.0,372.0 743.5,372.0" fill="#982a02" stroke="#1a0a04" stroke-width="0.8" stroke-linejoin="round" />
<polygon points="753.3,316.7 744.5,366.3 744.8,368.1 745.5,369.9 746.5,371.5 747.9,373.2 749.7,374.7 751.8,376.1 754.1,377.4 756.8,378.5 759.7,379.5 762.8,380.3 766.1,380.9 769.6,381.4 773.1,381.7 776.7,381.8 780.4,381.7 784.0,381.4 787.6,380.9 791.2,380.3 794.5,379.4 797.8,378.5 800.8,377.3 803.6,376.0 806.1,374.6 808.3,373.1 810.2,371.5 811.8,369.8 813.0,368.1 813.9,366.3 814.4,364.5 814.5,362.7 823.7,321.7 823.7,319.4 823.3,317.2 822.5,314.9 821.3,312.8 819.7,310.7 817.9,308.6 815.7,306.7 813.2,305.0 810.4,303.4 807.4,301.9 804.2,300.7 800.8,299.7 797.3,298.8 793.7,298.2 790.0,297.9 786.3,297.7 782.6,297.8 779.0,298.1 775.5,298.7 772.2,299.5 769.0,300.5 766.0,301.7 763.3,303.1 760.9,304.7 758.8,306.4 756.9,308.3 755.5,310.3 754.4,312.4 753.6,314.5 753.3,316.7" fill="url(#gcylR)" stroke="#1a0a04" stroke-width="1.6" stroke-linejoin="round"/>
<polygon points="823.7,321.7 823.2,324.4 822.1,327.1 820.5,329.6 818.2,332.0 815.5,334.1 812.3,336.0 808.8,337.6 804.8,338.9 800.6,339.9 796.2,340.5 791.6,340.7 787.0,340.5 782.4,340.0 777.9,339.2 773.6,338.0 769.6,336.5 765.9,334.6 762.5,332.6 759.7,330.2 757.3,327.7 755.4,325.1 754.1,322.3 753.4,319.5 753.3,316.7 753.8,314.0 754.9,311.3 756.5,308.8 758.8,306.4 761.5,304.3 764.7,302.4 768.2,300.8 772.2,299.5 776.4,298.5 780.8,297.9 785.4,297.7 790.0,297.9 794.6,298.4 799.1,299.2 803.4,300.4 807.4,301.9 811.1,303.8 814.5,305.8 817.3,308.2 819.7,310.7 821.6,313.3 822.9,316.1 823.6,318.9 823.7,321.7" fill="#e63d02" stroke="#1a0a04" stroke-width="1.5"/><polygon points="809.5,320.0 809.3,321.6 808.6,323.1 807.6,324.6 806.3,325.9 804.7,327.2 802.9,328.3 800.7,329.2 798.4,329.9 795.9,330.5 793.3,330.8 790.7,331.0 787.9,330.9 785.2,330.6 782.6,330.1 780.1,329.4 777.7,328.5 775.5,327.4 773.5,326.2 771.8,324.9 770.4,323.4 769.3,321.9 768.5,320.3 768.1,318.7 768.1,317.0 768.3,315.4 769.0,313.9 770.0,312.4 771.3,311.1 772.9,309.8 774.7,308.7 776.9,307.8 779.2,307.1 781.7,306.5 784.3,306.2 786.9,306.0 789.7,306.1 792.4,306.4 795.0,306.9 797.5,307.6 799.9,308.5 802.1,309.6 804.1,310.8 805.8,312.1 807.2,313.6 808.3,315.1 809.1,316.7 809.5,318.3 809.5,320.0" fill="url(#ginR)" stroke="#1a0a04" stroke-width="1.1"/>
<polygon points="808.8,320.6 823.6,323.3 823.0,328.3 808.5,326.0" fill="#f84702" stroke="#1a0a04" stroke-width="0.9" stroke-linejoin="round" />
<polygon points="807.0,325.0 808.5,326.0 823.0,328.3 822.6,331.0" fill="#c03402" stroke="none" stroke-width="0" stroke-linejoin="round" />
<polygon points="814.5,362.0 816.5,355.0 816.5,368.0 814.5,371.0" fill="#1a0803" stroke="none" stroke-width="0" stroke-linejoin="round" />
<polygon points="513.6,512.1 514.2,563.5 514.4,566.4 515.1,569.3 516.3,572.2 517.9,574.9 519.9,577.5 522.3,580.0 525.1,582.2 528.2,584.3 531.6,586.2 535.4,587.7 539.3,589.1 543.4,590.1 547.7,590.9 552.1,591.3 556.5,591.5 560.9,591.3 565.3,590.9 569.6,590.1 573.7,589.1 577.6,587.7 581.4,586.2 584.8,584.3 587.9,582.2 590.7,580.0 593.1,577.5 595.1,574.9 596.7,572.2 597.9,569.3 598.6,566.4 598.8,563.5 601.2,515.1 601.1,511.5 600.5,508.0 599.4,504.5 597.9,501.1 595.9,497.8 593.5,494.7 590.7,491.9 587.6,489.2 584.1,486.8 580.3,484.8 576.3,483.0 572.1,481.6 567.7,480.5 563.2,479.8 558.6,479.4 554.0,479.4 549.5,479.8 545.0,480.6 540.7,481.8 536.5,483.2 532.6,485.0 529.0,487.2 525.7,489.6 522.7,492.3 520.1,495.2 517.9,498.3 516.1,501.6 514.8,505.0 514.0,508.5 513.6,512.1" fill="url(#gcyl)" stroke="#1a0a04" stroke-width="1.6" stroke-linejoin="round"/>
<polygon points="601.2,515.1 600.6,519.6 599.4,523.9 597.4,528.1 594.7,532.0 591.4,535.6 587.5,538.8 583.1,541.6 578.3,544.0 573.0,545.8 567.6,547.0 561.9,547.7 556.2,547.8 550.5,547.3 544.9,546.2 539.5,544.6 534.5,542.4 529.8,539.8 525.6,536.7 521.9,533.2 518.9,529.4 516.5,525.3 514.8,521.0 513.8,516.5 513.6,512.1 514.2,507.6 515.4,503.3 517.4,499.1 520.1,495.2 523.4,491.6 527.3,488.4 531.7,485.6 536.5,483.2 541.8,481.4 547.2,480.2 552.9,479.5 558.6,479.4 564.3,479.9 569.9,481.0 575.3,482.6 580.3,484.8 585.0,487.4 589.2,490.5 592.9,494.0 595.9,497.8 598.3,501.9 600.0,506.2 601.0,510.7 601.2,515.1" fill="#e63d02" stroke="#1a0a04" stroke-width="1.5"/><polygon points="583.1,513.7 582.8,516.2 582.0,518.8 580.9,521.2 579.3,523.4 577.4,525.5 575.2,527.3 572.6,529.0 569.8,530.3 566.8,531.3 563.6,532.0 560.3,532.4 557.0,532.5 553.7,532.2 550.5,531.6 547.4,530.7 544.4,529.4 541.7,527.9 539.3,526.1 537.1,524.1 535.4,521.9 534.0,519.5 533.0,517.0 532.4,514.5 532.3,511.9 532.6,509.4 533.4,506.8 534.5,504.4 536.1,502.2 538.0,500.1 540.2,498.3 542.8,496.6 545.6,495.3 548.6,494.3 551.8,493.6 555.1,493.2 558.4,493.1 561.7,493.4 564.9,494.0 568.0,494.9 571.0,496.2 573.7,497.7 576.1,499.5 578.3,501.5 580.0,503.7 581.4,506.1 582.4,508.6 583.0,511.1 583.1,513.7" fill="url(#ginL)" stroke="#1a0a04" stroke-width="1.1"/>
<polygon points="566.6,546.5 581.0,542.6 580.5,586.0 578.4,600.5 573.0,606.0 565.6,605.6 566.0,560.0" fill="#d9d8d4" stroke="none" stroke-width="0" stroke-linejoin="round" />
<polygon points="559.6,531.8 573.5,528.6 572.8,546.0 567.0,547.6" fill="#fb4802" stroke="none" stroke-width="0" stroke-linejoin="round" />
<polygon points="566.6,546.5 572.6,544.5 572.4,560.0 570.6,557.5 566.7,556.0" fill="#f84702" stroke="none" stroke-width="0" stroke-linejoin="round" />
<path d="M564.5 540 Q568.5 541.2 572.4 543.4 M566.5 548.5 Q569.5 549.5 572.4 551 M566.6 552.5 Q569.5 553.5 572.3 555" fill="none" stroke="#1a0a04" stroke-width="0.7" opacity="0.8"/>
<polygon points="573.3,529.4 581.0,543.0 580.2,586.0 578.4,600.5 568.3,578.6 571.6,560.0 572.5,530.0" fill="#c03602" stroke="#1a0a04" stroke-width="1.1" stroke-linejoin="round" />
<polyline points="560.0,532.5 567.0,547.0 566.0,605.0" fill="none" stroke="#1a0a04" stroke-width="1.3" stroke-linejoin="round" stroke-linecap="round" />
<polyline points="581.0,543.0 580.4,584.0" fill="none" stroke="#1a0a04" stroke-width="0.9" stroke-linejoin="round" stroke-linecap="round" />
</svg>
<div id="tb"></div>
<svg id="ui" width="1024" height="640" viewBox="0 0 1024 640">
<rect x="438.8" y="3.8" width="31.4" height="33" rx="3.5" fill="#c4c3c6"/>
<g transform="translate(8.16 7.26) scale(0.920)" ><path d="M8 4.5 L8 19.5 L11.3 16.4 L13.6 21.3 L16 20.2 L13.7 15.4 L18 15.2 Z" fill="#111" stroke="#fff" stroke-width="0.9" stroke-linejoin="round"/></g>
<g transform="translate(38.80 6.90) scale(1.000)" ><path d="M4.1 11.75 L14.1 2.4 L21 4.9 L12.9 13.6 Z" fill="#f58fa8" stroke="#4a1522" stroke-width="1" stroke-linejoin="round"/><path d="M4.1 11.75 L12.9 13.6 L11.6 21.75 L2.9 16.75 Z" fill="#f9a8bc" stroke="#4a1522" stroke-width="1" stroke-linejoin="round"/><path d="M12.9 13.6 L21 4.9 L16.6 14.25 L11.6 21.75 Z" fill="#ee7f9c" stroke="#4a1522" stroke-width="1" stroke-linejoin="round"/><path d="M11.4 9.6 L15.2 5.4 L17 6 L13.2 10.2 Z" fill="#e0607f"/></g>
<g transform="translate(72.30 7.80) scale(0.950)" ><path d="M2.8 21.6 L5 16.6 L17.6 3.4 Q19.6 2.6 20.6 4 Q21.4 5.4 20.4 6.6 L7.6 19.6 Z" fill="#8c1418" stroke="#1c0406" stroke-width="1" stroke-linejoin="round"/><path d="M2.8 21.6 L5 16.6 L7.6 19.6 Z" fill="#d9c9a0" stroke="#1c0406" stroke-width="0.7"/><path d="M2.8 21.6 L3.8 19.4 L5 20.6 Z" fill="#111"/><path d="M6.4 18 L19 5" stroke="#c0383c" stroke-width="0.9"/></g>
<g transform="translate(110.00 7.00) scale(1.000)" ><path d="M4.3 4.6 L20 4.6 L4.3 20" fill="none" stroke="#e0283e" stroke-width="1"/><path d="M4.3 20 Q17.5 18.5 20 4.6" fill="none" stroke="#222" stroke-width="1.1"/><circle cx="4.3" cy="4.6" r="1.6" fill="#d8102a"/><circle cx="20" cy="4.6" r="1.6" fill="#d8102a"/><circle cx="4.3" cy="20" r="1.6" fill="#d8102a"/></g>
<g transform="translate(148.14 7.24) scale(0.980)" ><rect x="5" y="4.2" width="14" height="15.8" fill="#a9a996" stroke="#555548" stroke-width="1.1"/><path d="M5 20 L19 4.2" stroke="#fff" stroke-width="2.6" opacity="0.7"/><path d="M5 20 L19 4.2" stroke="#e0283e" stroke-width="1.1"/><circle cx="5" cy="20" r="1.5" fill="#d8102a"/><circle cx="19" cy="4.2" r="1.5" fill="#d8102a"/></g>
<g transform="translate(187.10 6.80) scale(0.950)" ><path d="M2.5 15.5 L12 11 L21.5 15 L12.5 20.5 Z" fill="#a9a996" stroke="#3a3a30" stroke-width="1" stroke-linejoin="round"/><path d="M2.5 15.5 L12.5 20.5 L21.5 15 L21.5 17.4 L12.5 23 L2.5 17.8 Z" fill="#77776a" stroke="#3a3a30" stroke-width="0.9" stroke-linejoin="round"/><path d="M10.4 16.5 L10.4 9.2 L7.8 9.2 L12 3 L16.2 9.2 L13.6 9.2 L13.6 16.5 Z" fill="#e01830" stroke="#8a0a18" stroke-width="0.9" stroke-linejoin="round"/></g>
<g transform="translate(218.32 6.12) scale(1.040)" ><path d="M3 7 Q9 1.5 16 5 Q22 9 19.5 21" fill="none" stroke="#e01830" stroke-width="1.5" stroke-linecap="round"/><path d="M5.5 13.5 Q6.5 9.2 11 9" fill="none" stroke="#333" stroke-width="1.4" stroke-linecap="round"/><path d="M15 14 Q15.5 18 11.6 20" fill="none" stroke="#333" stroke-width="1.4" stroke-linecap="round"/><path d="M9 13 L13.2 8.6 L11.6 7 L18.6 4.6 L16.4 12 L14.8 10.2 L12 15.4 Z" fill="#e01830" stroke="#8a0a18" stroke-width="0.8" stroke-linejoin="round"/></g>
<g transform="translate(250.40 7.00) scale(1.000)" ><path d="M12 2.6 L16 7.4 L13.6 7.4 L13.6 10.4 L16.6 10.4 L16.6 8 L21.4 12 L16.6 16 L16.6 13.6 L13.6 13.6 L13.6 16.6 L16 16.6 L12 21.4 L8 16.6 L10.4 16.6 L10.4 13.6 L7.4 13.6 L7.4 16 L2.6 12 L7.4 8 L7.4 10.4 L10.4 10.4 L10.4 7.4 L8 7.4 Z" fill="#e01830" stroke="#8a0a18" stroke-width="0.9" stroke-linejoin="round"/><circle cx="9.2" cy="9.2" r="1" fill="#fff"/><circle cx="14.8" cy="9.2" r="1" fill="#fff"/><circle cx="9.2" cy="14.8" r="1" fill="#fff"/><circle cx="14.8" cy="14.8" r="1" fill="#fff"/></g>
<g transform="translate(281.90 6.40) scale(1.050)" ><path d="M3.6 10.5 Q5.5 3.6 12.6 3.6 Q16 3.8 18 6 L20 4.2 L20.6 11 L13.8 10 L15.8 8.2 Q14 6.8 12.2 6.8 Q8 7 7 11 Z" fill="#e01830" stroke="#8a0a18" stroke-width="0.8" stroke-linejoin="round"/><path d="M20.4 13.5 Q18.5 20.4 11.4 20.4 Q8 20.2 6 18 L4 19.8 L3.4 13 L10.2 14 L8.2 15.8 Q10 17.2 11.8 17.2 Q16 17 17 13 Z" fill="#e01830" stroke="#8a0a18" stroke-width="0.8" stroke-linejoin="round"/></g>
<g transform="translate(314.80 6.90) scale(1.000)" ><rect x="3" y="2.6" width="18.6" height="19" fill="#f4f0f0" stroke="#e0506a" stroke-width="0.9"/><rect x="3" y="7.5" width="14" height="14.1" fill="#a9a996" stroke="#444438" stroke-width="1.2"/><path d="M11 12.4 L16.6 7.2 L14.6 5.2 L21.8 2.4 L19.6 10 L17.8 8.4 L12.6 13.8 Z" fill="#e01830" stroke="#8a0a18" stroke-width="0.8" stroke-linejoin="round"/></g>
<g transform="translate(347.44 7.04) scale(0.930)" ><path d="M2.4 19.2 L9.6 13 L12.2 16 L4.8 22 Z" fill="#e0d820" stroke="#222" stroke-width="0.9" stroke-linejoin="round"/><path d="M2 18.8 L5 22.4" stroke="#111" stroke-width="2.2"/><path d="M9 8.2 Q9.4 5.2 12.4 4.4 L18.6 3 Q21 3 20.8 5.6 L19.6 11.4 Q19 13.6 16.6 14.4 L12.8 16.2 Q10.4 16.6 9.6 13.8 Z" fill="#3c3c3c" stroke="#151515" stroke-width="1"/><path d="M12.2 8 Q12.6 6.4 14.2 6.2 L17.6 5.6 Q18.8 5.6 18.6 7 L17.8 10.6 Q17.4 12 16 12.4 L13.8 13.2 Q12.4 13.2 12.2 11.6 Z" fill="#dbe62a" stroke="#7a8010" stroke-width="0.6"/></g>
<g transform="translate(379.38 7.78) scale(0.960)" ><rect x="8.5" y="3" width="13" height="11.6" fill="#fff" stroke="#333" stroke-width="1"/><text x="15" y="12" text-anchor="middle" font-family="Liberation Serif, serif" font-weight="bold" font-size="8.4" fill="#222">A1</text><path d="M8.5 8.5 L5 8.5 L5 18" fill="none" stroke="#333" stroke-width="1"/><path d="M3 17.4 L7 17.4 L5 21.4 Z" fill="#111"/></g>
<g transform="translate(409.00 6.70) scale(1.000)" ><path d="M11 7 Q10.4 3 14 2.6 Q18 2.6 17.8 6.6" fill="none" stroke="#222" stroke-width="1.3"/><path d="M9 8.6 Q13.6 5.4 19.6 7.4 Q22.4 11 20.6 16.4 Q17 20.6 12 20 Q8.6 15.4 9 8.6 Z" fill="#3c3c3c" stroke="#111" stroke-width="0.9"/><ellipse cx="14.2" cy="8.4" rx="5" ry="2.6" transform="rotate(-8 14.2 8.4)" fill="#9ab8c8" stroke="#111" stroke-width="0.8"/><path d="M12.6 13 L18.4 12 Q19.4 15 17.6 17.6 L13 18 Z" fill="#e8dca8" stroke="#111" stroke-width="0.7"/><path d="M13.4 7.4 Q6 8 3.6 14 Q2.4 18.6 5 21.8 Q8 21.4 8.4 17 Q8.4 13 13.8 10.6 Q15 8.6 13.4 7.4 Z" fill="#f2b020" stroke="#5a3a04" stroke-width="0.9" stroke-linejoin="round"/></g>
<g transform="translate(442.56 7.16) scale(0.970)" ><path d="M11.4 5 Q2.4 5.4 2.4 11.4 Q2.8 16.6 8.6 17.4 L8.6 20.6 L14.6 15.6 L8.6 10.8 L8.6 13.4 Q6.8 12.8 6.8 11.2 Q7.2 9.2 11.4 9 Z" fill="#d82030" stroke="#6a0a14" stroke-width="0.8" stroke-linejoin="round"/><path d="M12.6 19 Q21.6 18.6 21.6 12.6 Q21.2 7.4 15.4 6.6 L15.4 3.4 L9.4 8.4 L15.4 13.2 L15.4 10.6 Q17.2 11.2 17.2 12.8 Q16.8 14.8 12.6 15 Z" fill="#3cb46a" stroke="#0a5a24" stroke-width="0.8" stroke-linejoin="round"/><path d="M12 1.4 L12 22.6" stroke="#111" stroke-width="1.8"/></g>
<g transform="translate(473.80 6.80) scale(1.000)" ><path d="M4 16.25 Q5 12.5 6.75 9.5 Q8 6.8 9.5 5.25 Q10.8 3.8 12.5 3.25 L17.5 3 Q19.8 3.2 20.5 5 Q20.8 6.2 20 7 L16 11 Q14.6 12.2 15 13 Q15.4 14 16.5 14.25 L19.5 14.5 Q20.6 14.8 20.5 15.5 Q20.2 16.6 19 16.75 L15.5 17 Q13 17.4 11 18.5 L8.5 20.5 L6 20.5 Z" fill="#f5e2b0"/><path d="M4.4 15.6 Q5.2 12.4 6.75 9.5 Q8 6.8 9.5 5.25 Q10.8 3.8 12.5 3.25 L17.5 3 Q19.8 3.2 20.5 5 Q20.8 6.2 20 7 L16 11 Q14.6 12.2 15 13 Q15.4 14 16.5 14.25 L19.5 14.5 Q20.6 14.8 20.5 15.5 Q20.2 16.6 19 16.75 L15.5 17 Q13 17.4 11 18.5 L9 20" fill="none" stroke="#6a5c34" stroke-width="0.9" stroke-linejoin="round" stroke-linecap="round"/><path d="M12.5 3.75 L10.5 6.25 M15.25 3.25 L12.5 7 M18 3.75 L14.75 7.75" fill="none" stroke="#6a5c34" stroke-width="0.8"/></g>
<g transform="translate(507.50 8.00) scale(0.900)" ><path d="M2.2 20.2 L10 12.4 L11.8 14.2 L4 22 Z" fill="#1a1a1a" stroke="#000" stroke-width="0.6" stroke-linejoin="round"/><circle cx="15" cy="8.4" r="5.7" fill="#8ec0ea" stroke="#16263a" stroke-width="1.7"/><path d="M11.6 7 Q12.6 4.4 15.4 4.2" fill="none" stroke="#d4eaff" stroke-width="1.1"/></g>
<g transform="translate(538.40 6.40) scale(1.000)" ><path d="M3.4 20 L8.8 14.8 L10.2 16.2 L4.8 21.6 Z" fill="#1a1a1a"/><circle cx="12.6" cy="12.4" r="4.5" fill="#8ec0ea" stroke="#16263a" stroke-width="1.4"/><path d="M3 3 L8.4 4.4 L6.9 5.9 L9.6 8.6 L8.4 9.8 L5.7 7.1 L4.4 8.4 Z" fill="#e01830" stroke="#8a0a18" stroke-width="0.5"/><path d="M21.4 3 L20 8.4 L18.5 6.9 L15.8 9.6 L14.6 8.4 L17.3 5.7 L16 4.4 Z" fill="#e01830" stroke="#8a0a18" stroke-width="0.5"/><path d="M21.4 21 L16 19.6 L17.5 18.1 L14.8 15.4 L16 14.2 L18.7 16.9 L20 15.6 Z" fill="#e01830" stroke="#8a0a18" stroke-width="0.5"/></g>
<g transform="translate(570.74 6.64) scale(0.980)" ><path d="M2.6 11.4 L5.4 7.4 L15.6 5 L18.4 6.6 L21.6 12.6 L18.8 16.8 L8.6 21.6 L5.2 17.8 Z" fill="#3c3c3c" stroke="#1a1a1a" stroke-width="0.9" stroke-linejoin="round"/><path d="M5.2 17.8 L8 14.6 L18.4 11.6 L18.8 16.8 L8.6 21.6 Z" fill="#262626"/><path d="M2.6 11.4 L5.4 7.4 L8 14.6 L5.2 17.8 Z" fill="#5a5a5a" stroke="#1a1a1a" stroke-width="0.6"/><path d="M6.4 8.4 Q6.2 7.4 7.2 7.2 L14.6 5.6 Q15.6 5.4 15.9 6.4 L17.6 13.2 Q17.8 14.2 16.9 14.6 L9.6 17.4 Q8.6 17.8 8.3 16.8 Z" fill="#d8202c" stroke="#7a0a12" stroke-width="0.7"/><path d="M9.2 9.6 L14.4 8.2 L14.8 9.6 L11 10.7 L11.3 11.7 L14.6 10.7 L15.4 13.4 L10.4 15 L10 13.6 L13.6 12.5 L13.3 11.6 L10 12.6 Z" fill="#fff"/></g>
<g transform="translate(602.44 6.64) scale(0.980)" ><path d="M1.6 9.6 L4 6.6 L7 13 L5 16.4 Z M17.6 5.6 L20.8 10.8 L19.2 15.4 L16.4 10 Z" fill="#f2f2f2" stroke="#3a3a3a" stroke-width="0.9" stroke-linejoin="round"/><path d="M5 16.4 L7 13 L16.4 10 L19.2 15.4 L8.6 20.6 Z" fill="#e6e6e6" stroke="#3a3a3a" stroke-width="0.9" stroke-linejoin="round"/><path d="M5.6 17.4 L8.6 20.6 L19.2 15.4 L19 17.2 L8.6 22.2 Z" fill="#444"/><path d="M4.5 8.9 L8.9 5.1 L12.9 4.5 L19.5 9.8 L11.7 15.6 Z" fill="#c01424" stroke="#5a060c" stroke-width="0.8" stroke-linejoin="round"/><path d="M4.5 8.9 L9.6 8.4 L19.5 9.8 M8.9 5.1 L9.6 8.4 L11.7 15.6 M12.9 4.5 L13.6 9 L11.7 15.6" fill="none" stroke="#f06a7a" stroke-width="0.5"/><path d="M10.4 6.2 L13 5.8 L12.6 8.4 Z" fill="#fff"/></g>
<g transform="translate(634.80 8.20) scale(0.900)" ><path d="M3.6 5 L15.8 2.6 L19.6 16.4 L7 20 Z" fill="#faf0f2" stroke="#f090a4" stroke-width="1.1" stroke-linejoin="round"/><path d="M6 7.4 L15 5.6 M6.6 9.8 L9.2 18 M9 10.6 L15.6 9 L17.2 14.6 L10.6 16.4 Z" fill="none" stroke="#f090a4" stroke-width="1"/><path d="M11.6 14.6 L17.4 14.6 L17.4 11.8 L22.6 16.6 L17.4 21.4 L17.4 18.6 L11.6 18.6 Z" fill="#5aa4e0" stroke="#2a6aa8" stroke-width="0.7" stroke-linejoin="round"/></g>
<g transform="translate(667.98 8.88) scale(0.860)" ><path d="M2.4 8.6 L6.6 3.6 L15.4 2.6 L20.4 7.4 L11.4 19.6 Z" fill="#c81424" stroke="#5a060c" stroke-width="0.9" stroke-linejoin="round"/><path d="M2.4 8.6 L20.4 7.4 M6.6 3.6 L9 8.2 L11.4 19.6 M15.4 2.6 L14 7.8 L11.4 19.6" fill="none" stroke="#f06a7a" stroke-width="0.6"/><path d="M10 6.6 L14 5.8 L12.4 9 Z" fill="#fff"/><circle cx="17.6" cy="18.4" r="3.9" fill="#8a1420" stroke="#3a060a" stroke-width="0.8"/><circle cx="17.6" cy="18.4" r="1.5" fill="#e8e0e0"/><path d="M17.6 13.6 L17.6 23.2 M12.8 18.4 L22.4 18.4 M14.2 15 L21 21.8 M21 15 L14.2 21.8" stroke="#8a1420" stroke-width="1.5"/><circle cx="17.6" cy="18.4" r="1.5" fill="#e8e0e0"/></g>
<path d="M96.2 17.0 L102.6 17.0 L99.4 20.8 Z" fill="#1a1a1a"/>
<path d="M134.3 17.0 L140.7 17.0 L137.5 20.8 Z" fill="#1a1a1a"/>
<path d="M172.7 17.0 L179.1 17.0 L175.9 20.8 Z" fill="#1a1a1a"/>
<defs><linearGradient id="gcell" x1="0" x2="0" y1="0" y2="1"><stop offset="0" stop-color="#f3f3f3"/><stop offset="1" stop-color="#eaeaea"/></linearGradient><filter id="dk" color-interpolation-filters="sRGB"><feComponentTransfer><feFuncR type="linear" slope="0.5"/><feFuncG type="linear" slope="0.5"/><feFuncB type="linear" slope="0.5"/></feComponentTransfer></filter><filter id="psh" x="-30%" y="-5%" width="170%" height="112%"><feGaussianBlur stdDeviation="2.6"/></filter></defs>
<path d="M-4 41 L53 41 Q58 41 58 46 L58 563 Q58 568.5 53 568.5 L-4 568.5 Z" fill="#000" opacity="0.36" filter="url(#psh)"/>
<path d="M0 38 L55 38 Q57 38 57 40 L57 561 Q57 565 53 565 L4 565 Q0 565 0 561 L0 42 Q0 38 4 38 Z" fill="#f5f5f5" stroke="#c4c4c4" stroke-width="0.7"/>
<circle cx="9.3" cy="43.8" r="4.3" fill="#dadada"/>
<rect x="2.5" y="50.5" width="52" height="52.8" fill="url(#gcell)" stroke="#c6c6c6" stroke-width="0.9"/>
<line x1="28.5" y1="50.5" x2="28.5" y2="103.3" stroke="#c6c6c6" stroke-width="0.9"/>
<g transform="translate(6.86 55.06) scale(0.720)" ><path d="M8 4.5 L8 19.5 L11.3 16.4 L13.6 21.3 L16 20.2 L13.7 15.4 L18 15.2 Z" fill="#111" stroke="#fff" stroke-width="0.9" stroke-linejoin="round"/></g>
<g transform="translate(31.42 53.62) scale(0.840)" ><path d="M5 6.6 L14.6 3 L20.4 7.4 L19.6 17 L10 21.6 L5.4 16 Z" fill="#f0b8c4" stroke="#d8506a" stroke-width="1.5" stroke-linejoin="round"/><path d="M7 8 L14.4 5.2 L18.4 8.4 L17.8 15.6 L10.6 19.2 L7.2 15 Z" fill="#8a8a7a" stroke="#4a4a40" stroke-width="0.7"/><path d="M7 8 L11 11.4 L18.4 8.4 M11 11.4 L10.6 19.2" fill="none" stroke="#444" stroke-width="0.8"/><path d="M11 11.4 L14.4 10 L14.2 13.4 L10.8 15 Z" fill="#c02838"/><path d="M9 10 L11 11.4 L10.8 15 L8.8 13 Z" fill="#3a8a48"/><circle cx="14" cy="8" r="1.3" fill="#e8e8e8"/></g>
<line x1="2.5" y1="76.9" x2="54.5" y2="76.9" stroke="#c6c6c6" stroke-width="0.9"/>
<g transform="translate(5.42 80.02) scale(0.840)" ><path d="M11 7 Q10.4 3 14 2.6 Q18 2.6 17.8 6.6" fill="none" stroke="#222" stroke-width="1.3"/><path d="M9 8.6 Q13.6 5.4 19.6 7.4 Q22.4 11 20.6 16.4 Q17 20.6 12 20 Q8.6 15.4 9 8.6 Z" fill="#3c3c3c" stroke="#111" stroke-width="0.9"/><ellipse cx="14.2" cy="8.4" rx="5" ry="2.6" transform="rotate(-8 14.2 8.4)" fill="#9ab8c8" stroke="#111" stroke-width="0.8"/><path d="M12.6 13 L18.4 12 Q19.4 15 17.6 17.6 L13 18 Z" fill="#e8dca8" stroke="#111" stroke-width="0.7"/><path d="M13.4 7.4 Q6 8 3.6 14 Q2.4 18.6 5 21.8 Q8 21.4 8.4 17 Q8.4 13 13.8 10.6 Q15 8.6 13.4 7.4 Z" fill="#f2b020" stroke="#5a3a04" stroke-width="0.9" stroke-linejoin="round"/></g>
<g transform="translate(31.42 80.02) scale(0.840)" ><path d="M4.1 11.75 L14.1 2.4 L21 4.9 L12.9 13.6 Z" fill="#f58fa8" stroke="#4a1522" stroke-width="1" stroke-linejoin="round"/><path d="M4.1 11.75 L12.9 13.6 L11.6 21.75 L2.9 16.75 Z" fill="#f9a8bc" stroke="#4a1522" stroke-width="1" stroke-linejoin="round"/><path d="M12.9 13.6 L21 4.9 L16.6 14.25 L11.6 21.75 Z" fill="#ee7f9c" stroke="#4a1522" stroke-width="1" stroke-linejoin="round"/><path d="M11.4 9.6 L15.2 5.4 L17 6 L13.2 10.2 Z" fill="#e0607f"/></g>
<rect x="2.5" y="111.0" width="52" height="132.0" fill="url(#gcell)" stroke="#c6c6c6" stroke-width="0.9"/>
<line x1="28.5" y1="111.0" x2="28.5" y2="243.0" stroke="#c6c6c6" stroke-width="0.9"/>
<g transform="translate(5.42 114.12) scale(0.840)" ><path d="M2.8 21.6 L5 16.6 L17.6 3.4 Q19.6 2.6 20.6 4 Q21.4 5.4 20.4 6.6 L7.6 19.6 Z" fill="#8c1418" stroke="#1c0406" stroke-width="1" stroke-linejoin="round"/><path d="M2.8 21.6 L5 16.6 L7.6 19.6 Z" fill="#d9c9a0" stroke="#1c0406" stroke-width="0.7"/><path d="M2.8 21.6 L3.8 19.4 L5 20.6 Z" fill="#111"/><path d="M6.4 18 L19 5" stroke="#c0383c" stroke-width="0.9"/></g>
<g transform="translate(31.42 114.12) scale(0.840)" ><path d="M3.1 20.7 C2.6 15 6 13.2 9 14.6 C12.4 16.2 14 21.4 17.6 19.6 C21.2 17.4 17 12 13 9.2 C9 6.4 3.6 8.6 5.4 5.2 C7.6 2.4 14 2.8 17 5 C20 7 22 8.6 20.4 3.4" fill="none" stroke="#c8102a" stroke-width="1.5" stroke-linecap="round"/><circle cx="3.1" cy="20.7" r="1.5" fill="#c8102a"/><path d="M18.4 3.6 L20 0.8 L22.4 4 Z" fill="#c8102a"/></g>
<line x1="2.5" y1="137.4" x2="54.5" y2="137.4" stroke="#c6c6c6" stroke-width="0.9"/>
<g transform="translate(5.42 140.52) scale(0.840)" ><rect x="5" y="4.2" width="14" height="15.8" fill="#a9a996" stroke="#555548" stroke-width="1.1"/><path d="M5 20 L19 4.2" stroke="#fff" stroke-width="2.6" opacity="0.7"/><path d="M5 20 L19 4.2" stroke="#e0283e" stroke-width="1.1"/><circle cx="5" cy="20" r="1.5" fill="#d8102a"/><circle cx="19" cy="4.2" r="1.5" fill="#d8102a"/></g>
<g transform="translate(31.42 140.52) scale(0.840)" ><rect x="6" y="4.5" width="13" height="15.5" fill="#a9a996" stroke="#555548" stroke-width="1.1"/><path d="M6 20 L6 4.5" stroke="#e0283e" stroke-width="1.2"/><path d="M6 20 Q17 18 19 11" fill="none" stroke="#e0283e" stroke-width="1" stroke-dasharray="1.5 1.5"/><circle cx="6" cy="20" r="1.5" fill="#d8102a"/><circle cx="6" cy="4.5" r="1.5" fill="#d8102a"/><circle cx="19" cy="20" r="1.5" fill="#d8102a"/></g>
<line x1="2.5" y1="163.8" x2="54.5" y2="163.8" stroke="#c6c6c6" stroke-width="0.9"/>
<g transform="translate(5.42 166.92) scale(0.840)" ><circle cx="12" cy="12.5" r="8.3" fill="#a9a996" stroke="#555548" stroke-width="1.1"/><path d="M12 12.5 L18 6.8" stroke="#fff" stroke-width="2.4" opacity="0.7"/><path d="M12 12.5 L18 6.8" stroke="#e0283e" stroke-width="1.1"/><circle cx="12" cy="12.5" r="1.4" fill="#d8102a"/><circle cx="18" cy="6.8" r="1.4" fill="#d8102a"/></g>
<g transform="translate(31.42 166.92) scale(0.840)" ><path d="M12 4 L19.6 9.4 L17 18.8 L7.4 19.2 L4.2 10 Z" fill="#a9a996" stroke="#555548" stroke-width="1.1" stroke-linejoin="round"/><circle cx="12" cy="12" r="8.6" fill="none" stroke="#e0283e" stroke-width="1"/><path d="M12 12 L18.5 7" stroke="#e0283e" stroke-width="1.1"/><circle cx="12" cy="12" r="1.3" fill="#d8102a"/><circle cx="18.7" cy="6.8" r="1.3" fill="#d8102a"/></g>
<line x1="2.5" y1="190.2" x2="54.5" y2="190.2" stroke="#c6c6c6" stroke-width="0.9"/>
<g transform="translate(5.42 193.32) scale(0.840)" ><path d="M4.3 4.6 L20 4.6 L4.3 20" fill="none" stroke="#e0283e" stroke-width="1"/><path d="M4.3 20 Q17.5 18.5 20 4.6" fill="none" stroke="#222" stroke-width="1.1"/><circle cx="4.3" cy="4.6" r="1.6" fill="#d8102a"/><circle cx="20" cy="4.6" r="1.6" fill="#d8102a"/><circle cx="4.3" cy="20" r="1.6" fill="#d8102a"/></g>
<g transform="translate(31.42 193.32) scale(0.840)" ><path d="M7.6 19.3 Q1.5 12.5 6.6 5.6 Q13 -0.6 20.9 5.6" fill="none" stroke="#333" stroke-width="1.2"/><path d="M7.6 19.3 L20.9 5.6 M14.2 12.4 L6.6 5.6" fill="none" stroke="#e0283e" stroke-width="1"/><circle cx="7.6" cy="19.3" r="1.5" fill="#d8102a"/><circle cx="20.9" cy="5.6" r="1.5" fill="#d8102a"/><circle cx="6.6" cy="5.6" r="1.5" fill="#d8102a"/></g>
<line x1="2.5" y1="216.6" x2="54.5" y2="216.6" stroke="#c6c6c6" stroke-width="0.9"/>
<g transform="translate(5.42 219.72) scale(0.840)" ><path d="M9.6 3.9 A8.9 8.9 0 1 1 4.3 14.6" fill="none" stroke="#333" stroke-width="1.2"/><path d="M9.6 3.9 L18.5 18.2 L4.3 14.6" fill="none" stroke="#e0283e" stroke-width="1"/><circle cx="9.6" cy="3.9" r="1.5" fill="#d8102a"/><circle cx="4.3" cy="14.6" r="1.5" fill="#d8102a"/><circle cx="18.5" cy="18.2" r="1.5" fill="#d8102a"/></g>
<g transform="translate(31.42 219.72) scale(0.840)" ><path d="M4.3 4.5 L19.5 4.5 Q19 17 4.3 18.8 Z" fill="#a9a08e" stroke="none"/><path d="M19.5 4.5 Q19 17 4.3 18.8" fill="none" stroke="#333" stroke-width="1.2"/><path d="M4.3 18.8 L19.5 4.5" stroke="#f0b0b8" stroke-width="1"/><path d="M19.5 4.5 L4.3 4.5 L4.3 18.8" fill="none" stroke="#e0283e" stroke-width="1.1" stroke-dasharray="1.8 1.4"/><circle cx="4.3" cy="4.5" r="1.4" fill="#d8102a"/><circle cx="19.5" cy="4.5" r="1.4" fill="#d8102a"/><circle cx="4.3" cy="18.8" r="1.4" fill="#d8102a"/></g>
<rect x="2.5" y="250.6" width="52" height="79.2" fill="url(#gcell)" stroke="#c6c6c6" stroke-width="0.9"/>
<line x1="28.5" y1="250.6" x2="28.5" y2="329.8" stroke="#c6c6c6" stroke-width="0.9"/>
<g transform="translate(5.42 253.72) scale(0.840)" ><path d="M12 2.6 L16 7.4 L13.6 7.4 L13.6 10.4 L16.6 10.4 L16.6 8 L21.4 12 L16.6 16 L16.6 13.6 L13.6 13.6 L13.6 16.6 L16 16.6 L12 21.4 L8 16.6 L10.4 16.6 L10.4 13.6 L7.4 13.6 L7.4 16 L2.6 12 L7.4 8 L7.4 10.4 L10.4 10.4 L10.4 7.4 L8 7.4 Z" fill="#e01830" stroke="#8a0a18" stroke-width="0.9" stroke-linejoin="round"/><circle cx="9.2" cy="9.2" r="1" fill="#fff"/><circle cx="14.8" cy="9.2" r="1" fill="#fff"/><circle cx="9.2" cy="14.8" r="1" fill="#fff"/><circle cx="14.8" cy="14.8" r="1" fill="#fff"/></g>
<g transform="translate(31.42 253.72) scale(0.840)" ><path d="M2.5 15.5 L12 11 L21.5 15 L12.5 20.5 Z" fill="#a9a996" stroke="#3a3a30" stroke-width="1" stroke-linejoin="round"/><path d="M2.5 15.5 L12.5 20.5 L21.5 15 L21.5 17.4 L12.5 23 L2.5 17.8 Z" fill="#77776a" stroke="#3a3a30" stroke-width="0.9" stroke-linejoin="round"/><path d="M10.4 16.5 L10.4 9.2 L7.8 9.2 L12 3 L16.2 9.2 L13.6 9.2 L13.6 16.5 Z" fill="#e01830" stroke="#8a0a18" stroke-width="0.9" stroke-linejoin="round"/></g>
<line x1="2.5" y1="277.0" x2="54.5" y2="277.0" stroke="#c6c6c6" stroke-width="0.9"/>
<g transform="translate(5.42 280.12) scale(0.840)" ><path d="M3.6 10.5 Q5.5 3.6 12.6 3.6 Q16 3.8 18 6 L20 4.2 L20.6 11 L13.8 10 L15.8 8.2 Q14 6.8 12.2 6.8 Q8 7 7 11 Z" fill="#e01830" stroke="#8a0a18" stroke-width="0.8" stroke-linejoin="round"/><path d="M20.4 13.5 Q18.5 20.4 11.4 20.4 Q8 20.2 6 18 L4 19.8 L3.4 13 L10.2 14 L8.2 15.8 Q10 17.2 11.8 17.2 Q16 17 17 13 Z" fill="#e01830" stroke="#8a0a18" stroke-width="0.8" stroke-linejoin="round"/></g>
<g transform="translate(31.42 280.12) scale(0.840)" ><path d="M3 14 Q2 6 10 4 Q18 3 21 9 Q22 14 18 15 Q17 11 13 10 Q8 10 8.5 15 Q9 19 13 20 L11 23 Q3 21 3 14 Z" fill="#555" stroke="#222" stroke-width="0.9"/><path d="M6 13 Q6 7.5 12 7 Q17 7 18.5 11" fill="none" stroke="#e01830" stroke-width="2.2"/><path d="M10 17.5 L17 14.5 L15.8 12.6 L21.6 13.4 L19.6 19 L18.4 17 L11.4 20 Z" fill="#e01830" stroke="#8a0a18" stroke-width="0.7"/></g>
<line x1="2.5" y1="303.4" x2="54.5" y2="303.4" stroke="#c6c6c6" stroke-width="0.9"/>
<g transform="translate(5.42 306.52) scale(0.840)" ><rect x="3" y="2.6" width="18.6" height="19" fill="#f4f0f0" stroke="#e0506a" stroke-width="0.9"/><rect x="3" y="7.5" width="14" height="14.1" fill="#a9a996" stroke="#444438" stroke-width="1.2"/><path d="M11 12.4 L16.6 7.2 L14.6 5.2 L21.8 2.4 L19.6 10 L17.8 8.4 L12.6 13.8 Z" fill="#e01830" stroke="#8a0a18" stroke-width="0.8" stroke-linejoin="round"/></g>
<g transform="translate(31.42 306.52) scale(0.840)" ><path d="M3 7 Q9 1.5 16 5 Q22 9 19.5 21" fill="none" stroke="#e01830" stroke-width="1.5" stroke-linecap="round"/><path d="M5.5 13.5 Q6.5 9.2 11 9" fill="none" stroke="#333" stroke-width="1.4" stroke-linecap="round"/><path d="M15 14 Q15.5 18 11.6 20" fill="none" stroke="#333" stroke-width="1.4" stroke-linecap="round"/><path d="M9 13 L13.2 8.6 L11.6 7 L18.6 4.6 L16.4 12 L14.8 10.2 L12 15.4 Z" fill="#e01830" stroke="#8a0a18" stroke-width="0.8" stroke-linejoin="round"/></g>
<rect x="2.5" y="337.2" width="52" height="79.2" fill="url(#gcell)" stroke="#c6c6c6" stroke-width="0.9"/>
<line x1="28.5" y1="337.2" x2="28.5" y2="416.4" stroke="#c6c6c6" stroke-width="0.9"/>
<g transform="translate(5.90 340.80) scale(0.800)" ><path d="M2.4 19.2 L9.6 13 L12.2 16 L4.8 22 Z" fill="#e0d820" stroke="#222" stroke-width="0.9" stroke-linejoin="round"/><path d="M2 18.8 L5 22.4" stroke="#111" stroke-width="2.2"/><path d="M9 8.2 Q9.4 5.2 12.4 4.4 L18.6 3 Q21 3 20.8 5.6 L19.6 11.4 Q19 13.6 16.6 14.4 L12.8 16.2 Q10.4 16.6 9.6 13.8 Z" fill="#3c3c3c" stroke="#151515" stroke-width="1"/><path d="M12.2 8 Q12.6 6.4 14.2 6.2 L17.6 5.6 Q18.8 5.6 18.6 7 L17.8 10.6 Q17.4 12 16 12.4 L13.8 13.2 Q12.4 13.2 12.2 11.6 Z" fill="#dbe62a" stroke="#7a8010" stroke-width="0.6"/></g>
<g transform="translate(30.70 339.60) scale(0.900)" ><path d="M8.7 1.8 L21.2 11.2 M2.5 11.2 L13.4 19.8" fill="none" stroke="#333" stroke-width="1"/><path d="M4.5 14.7 L16.5 3.7" stroke="#333" stroke-width="1"/><text x="6" y="7.6" font-family="Liberation Sans, sans-serif" font-size="6.5" fill="#222" transform="rotate(-42 6 7.6)">5</text></g>
<line x1="2.5" y1="363.6" x2="54.5" y2="363.6" stroke="#c6c6c6" stroke-width="0.9"/>
<g transform="translate(5.42 366.72) scale(0.840)" ><path d="M2.6 17.4 Q3.4 7.6 20 4.4 Q21.4 4.6 21 6 L9.6 21.4 Q8.6 22.4 7.2 21.8 L3.2 19.4 Q2.5 18.6 2.6 17.4 Z" fill="#8a8826" stroke="#26260e" stroke-width="1" stroke-linejoin="round"/><path d="M6.4 16.6 Q8.4 10.6 16 8.6 L9.4 17.6 Q8 18.4 6.4 16.6 Z" fill="#ececec" stroke="#26260e" stroke-width="0.8" stroke-linejoin="round"/><path d="M3 18.6 L7.6 21.4 L9.4 20.6" fill="none" stroke="#c8c650" stroke-width="0.7"/></g>
<g transform="translate(31.90 367.20) scale(0.800)" ><rect x="8.5" y="3" width="13" height="11.6" fill="#fff" stroke="#333" stroke-width="1"/><text x="15" y="12" text-anchor="middle" font-family="Liberation Serif, serif" font-weight="bold" font-size="8.4" fill="#222">A1</text><path d="M8.5 8.5 L5 8.5 L5 18" fill="none" stroke="#333" stroke-width="1"/><path d="M3 17.4 L7 17.4 L5 21.4 Z" fill="#111"/></g>
<line x1="2.5" y1="390.0" x2="54.5" y2="390.0" stroke="#c6c6c6" stroke-width="0.9"/>
<g transform="translate(7.10 394.80) scale(0.700)" ><path d="M12 13 L12 2.5" stroke="#2040c8" stroke-width="1.3"/><path d="M12 13 L21 19.5" stroke="#d8102a" stroke-width="1.3"/><path d="M12 13 L21.5 8" stroke="#20a040" stroke-width="1.3"/><path d="M12 13 L3 19" stroke="#20a040" stroke-width="0.9"/><path d="M12 13 L4 7.5" stroke="#d8102a" stroke-width="0.9"/><path d="M12 13 L12 22" stroke="#2040c8" stroke-width="0.9"/><path d="M12 0.8 L10.4 4.2 L13.6 4.2 Z" fill="#2040c8"/><path d="M23 21 L19 20.4 L21 17.6 Z" fill="#d8102a"/><path d="M23.4 7 L19.6 7.4 L21.4 10 Z" fill="#20a040"/><circle cx="12" cy="13" r="1.3" fill="#222"/></g>
<g transform="translate(32.62 394.32) scale(0.740)" ><path d="M3 21.5 L9.6 3 L14.8 3 L21.4 21.5 L16.4 21.5 L15 17.4 L9.4 17.4 L8 21.5 Z M12.2 7.6 L10.6 13.4 L13.8 13.4 Z" fill="#777766" fill-rule="evenodd" stroke="#1e1e18" stroke-width="1" stroke-linejoin="round"/><path d="M14.8 3 L17 4.6 L23 22.2 L21.4 21.5 Z" fill="#3c3c32" stroke="#1e1e18" stroke-width="0.8"/><path d="M3 21.5 L8 21.5 L9.6 23 L4.6 23 Z M16.4 21.5 L21.4 21.5 L23 22.2 L18 23 Z" fill="#3c3c32" stroke="#1e1e18" stroke-width="0.6"/></g>
<rect x="2.5" y="423.4" width="52" height="79.2" fill="url(#gcell)" stroke="#c6c6c6" stroke-width="0.9"/>
<line x1="28.5" y1="423.4" x2="28.5" y2="502.6" stroke="#c6c6c6" stroke-width="0.9"/>
<rect x="2.9" y="423.8" width="25.2" height="25.6" fill="#bdbdbd"/>
<g transform="translate(5.42 426.52) scale(0.840)" filter="url(#dk)"><path d="M11.4 5 Q2.4 5.4 2.4 11.4 Q2.8 16.6 8.6 17.4 L8.6 20.6 L14.6 15.6 L8.6 10.8 L8.6 13.4 Q6.8 12.8 6.8 11.2 Q7.2 9.2 11.4 9 Z" fill="#d82030" stroke="#6a0a14" stroke-width="0.8" stroke-linejoin="round"/><path d="M12.6 19 Q21.6 18.6 21.6 12.6 Q21.2 7.4 15.4 6.6 L15.4 3.4 L9.4 8.4 L15.4 13.2 L15.4 10.6 Q17.2 11.2 17.2 12.8 Q16.8 14.8 12.6 15 Z" fill="#3cb46a" stroke="#0a5a24" stroke-width="0.8" stroke-linejoin="round"/><path d="M12 1.4 L12 22.6" stroke="#111" stroke-width="1.8"/></g>
<g transform="translate(31.42 426.52) scale(0.840)" ><path d="M4 16.25 Q5 12.5 6.75 9.5 Q8 6.8 9.5 5.25 Q10.8 3.8 12.5 3.25 L17.5 3 Q19.8 3.2 20.5 5 Q20.8 6.2 20 7 L16 11 Q14.6 12.2 15 13 Q15.4 14 16.5 14.25 L19.5 14.5 Q20.6 14.8 20.5 15.5 Q20.2 16.6 19 16.75 L15.5 17 Q13 17.4 11 18.5 L8.5 20.5 L6 20.5 Z" fill="#f5e2b0"/><path d="M4.4 15.6 Q5.2 12.4 6.75 9.5 Q8 6.8 9.5 5.25 Q10.8 3.8 12.5 3.25 L17.5 3 Q19.8 3.2 20.5 5 Q20.8 6.2 20 7 L16 11 Q14.6 12.2 15 13 Q15.4 14 16.5 14.25 L19.5 14.5 Q20.6 14.8 20.5 15.5 Q20.2 16.6 19 16.75 L15.5 17 Q13 17.4 11 18.5 L9 20" fill="none" stroke="#6a5c34" stroke-width="0.9" stroke-linejoin="round" stroke-linecap="round"/><path d="M12.5 3.75 L10.5 6.25 M15.25 3.25 L12.5 7 M18 3.75 L14.75 7.75" fill="none" stroke="#6a5c34" stroke-width="0.8"/></g>
<line x1="2.5" y1="449.8" x2="54.5" y2="449.8" stroke="#c6c6c6" stroke-width="0.9"/>
<g transform="translate(5.90 453.40) scale(0.800)" ><path d="M2.2 20.2 L10 12.4 L11.8 14.2 L4 22 Z" fill="#1a1a1a" stroke="#000" stroke-width="0.6" stroke-linejoin="round"/><circle cx="15" cy="8.4" r="5.7" fill="#8ec0ea" stroke="#16263a" stroke-width="1.7"/><path d="M11.6 7 Q12.6 4.4 15.4 4.2" fill="none" stroke="#d4eaff" stroke-width="1.1"/></g>
<g transform="translate(31.42 452.92) scale(0.840)" ><rect x="3" y="3" width="17.4" height="17.4" fill="#f8e8ea" stroke="#d8102a" stroke-width="1.3" stroke-dasharray="2 1.4"/><path d="M2.2 21 L9.4 13.6 L11.2 15.4 L4 22.8 Z" fill="#1a1a1a"/><circle cx="14.2" cy="9.4" r="5.4" fill="#8ec0ea" stroke="#16263a" stroke-width="1.6"/></g>
<line x1="2.5" y1="476.2" x2="54.5" y2="476.2" stroke="#c6c6c6" stroke-width="0.9"/>
<g transform="translate(5.42 479.32) scale(0.840)" ><path d="M3.4 20 L8.8 14.8 L10.2 16.2 L4.8 21.6 Z" fill="#1a1a1a"/><circle cx="12.6" cy="12.4" r="4.5" fill="#8ec0ea" stroke="#16263a" stroke-width="1.4"/><path d="M3 3 L8.4 4.4 L6.9 5.9 L9.6 8.6 L8.4 9.8 L5.7 7.1 L4.4 8.4 Z" fill="#e01830" stroke="#8a0a18" stroke-width="0.5"/><path d="M21.4 3 L20 8.4 L18.5 6.9 L15.8 9.6 L14.6 8.4 L17.3 5.7 L16 4.4 Z" fill="#e01830" stroke="#8a0a18" stroke-width="0.5"/><path d="M21.4 21 L16 19.6 L17.5 18.1 L14.8 15.4 L16 14.2 L18.7 16.9 L20 15.6 Z" fill="#e01830" stroke="#8a0a18" stroke-width="0.5"/></g>
<g transform="translate(31.42 479.32) scale(0.840)" ><path d="M12.6 20.4 L21 22.4 L14.6 14.4 Z" fill="#1a1a1a"/><path d="M3.4 18.8 L8 14.6 L9.4 16 L4.8 20.4 Z" fill="#1a1a1a"/><circle cx="13.6" cy="14.4" r="4.4" fill="#8ec0ea" stroke="#16263a" stroke-width="1.4"/><path d="M2.4 8.6 L8.6 2.8 L8.6 5.8 Q16 4.6 19 9.6 Q20.4 13 18.6 15.4 Q18 10 8.6 10.8 L8.6 13.8 Z" fill="#2a7ad8" stroke="#0c3a78" stroke-width="0.8" stroke-linejoin="round"/></g>
<rect x="2.5" y="509.4" width="52" height="52.8" fill="url(#gcell)" stroke="#c6c6c6" stroke-width="0.9"/>
<line x1="28.5" y1="509.4" x2="28.5" y2="562.2" stroke="#c6c6c6" stroke-width="0.9"/>
<g transform="translate(5.42 512.52) scale(0.840)" ><path d="M8 21 L16 15.6 M8 15.6 L16 21" stroke="#e0506a" stroke-width="1"/><path d="M10.2 14.4 Q12 17.6 13.8 14.4" fill="none" stroke="#d8102a" stroke-width="1"/><ellipse cx="12" cy="9.6" rx="2.9" ry="5.4" fill="#fff" stroke="#333" stroke-width="1"/><circle cx="12" cy="3" r="1.1" fill="#ddd" stroke="#333" stroke-width="0.7"/></g>
<g transform="translate(31.42 512.52) scale(0.840)" ><g transform="rotate(8 7 12)"><ellipse cx="6.9" cy="9" rx="2.9" ry="4.4" fill="#111"/><ellipse cx="7.2" cy="17.4" rx="2.3" ry="2.5" fill="#111"/><path d="M5 12.6 L9 12.6 L9.2 15.4 L5.2 15.4 Z" fill="#111"/><path d="M5 14 L9.2 14" stroke="#eee" stroke-width="0.7"/></g><g transform="rotate(22 17 10)"><ellipse cx="17.4" cy="6.6" rx="2.9" ry="4.4" fill="#111"/><ellipse cx="17.2" cy="15" rx="2.3" ry="2.5" fill="#111"/><path d="M15.4 10 L19.4 10 L19.2 13 L15.2 13 Z" fill="#111"/><path d="M15.2 11.6 L19.4 11.6" stroke="#eee" stroke-width="0.7"/></g></g>
<line x1="2.5" y1="535.8" x2="54.5" y2="535.8" stroke="#c6c6c6" stroke-width="0.9"/>
<g transform="translate(7.10 540.60) scale(0.700)" ><path d="M1.6 12.6 Q6 5.6 12.6 5.6 Q19 5.8 22.6 11.6 Q18 17.6 12 17.6 Q6 17.4 1.6 12.6 Z" fill="#e8e8e8" stroke="#222" stroke-width="1"/><circle cx="12.4" cy="11.4" r="4.6" fill="#3a3a3a"/><circle cx="12.4" cy="11.4" r="2" fill="#000"/><circle cx="11" cy="9.8" r="1" fill="#fff"/><path d="M2 9.6 Q6.6 3.4 12.6 3.2 Q18.6 3.2 22.4 8" fill="none" stroke="#222" stroke-width="1.4"/><path d="M3.4 15.6 Q7 20 12 20 Q17 20 20.6 15.4" fill="none" stroke="#555" stroke-width="0.8"/></g>
<g transform="translate(31.90 539.40) scale(0.800)" ><circle cx="12" cy="12" r="5" fill="none" stroke="#222" stroke-width="1"/><path d="M3 12 L20 12 M12 7 L12 17" stroke="#222" stroke-width="1"/><path d="M12 3.4 L21 12 L12 20.6" fill="none" stroke="#222" stroke-width="1.1" stroke-linejoin="miter"/><path d="M21.8 12 L18.4 9.8 L18.4 14.2 Z" fill="#111"/><path d="M12 2.4 L10.6 5 L13.4 5 Z M12 21.6 L10.6 19 L13.4 19 Z" fill="#111"/></g>
<rect x="0" y="617" width="1024" height="23" fill="#ececec"/>
<line x1="0" y1="617.3" x2="1024" y2="617.3" stroke="#d4d4d2" stroke-width="0.8"/>
<circle cx="12.2" cy="629" r="6.3" fill="#f0f0f0" stroke="#a8a8a8" stroke-width="1.1"/>
<path d="M12.2 624.6 Q15.4 624.8 15.2 627.8 Q14.8 630 12.2 633.6 Q9.6 630 9.2 627.8 Q9 624.8 12.2 624.6 Z" fill="#b4b4b4"/>
<circle cx="32" cy="629" r="6.3" fill="#f0f0f0" stroke="#a8a8a8" stroke-width="1.1"/>
<circle cx="32" cy="625.6" r="1.4" fill="#b0b0b0"/><path d="M29.4 628 L34.6 628 L33.6 630.4 L33.4 634 L30.6 634 L30.4 630.4 Z" fill="#b0b0b0"/>
<circle cx="51.2" cy="629" r="6.6" fill="#fff" stroke="#111" stroke-width="1.5"/>
<circle cx="51.2" cy="626.6" r="2.5" fill="#111"/><path d="M46.2 633.2 Q46.6 629.8 51.2 629.8 Q55.8 629.8 56.2 633.2 Q53.8 635.4 51.2 635.4 Q48.6 635.4 46.2 633.2 Z" fill="#111"/>
<line x1="61.8" y1="620" x2="61.8" y2="637" stroke="#d0d0d0" stroke-width="1"/>
<circle cx="72.8" cy="629.2" r="7" fill="#1c3f86" stroke="#0c1c44" stroke-width="1.2"/>
<text x="72.8" y="633.4" text-anchor="middle" font-family="Liberation Sans, sans-serif" font-weight="bold" font-size="11.5" fill="#0a1230">?</text>
</svg>
<div class="st" id="hint">Drag to orbit. Shift = Pan, Option = suspend gravity.</div>
<div class="st" id="meas">Measurements</div>
<div id="mbox"></div>
</body></html>
